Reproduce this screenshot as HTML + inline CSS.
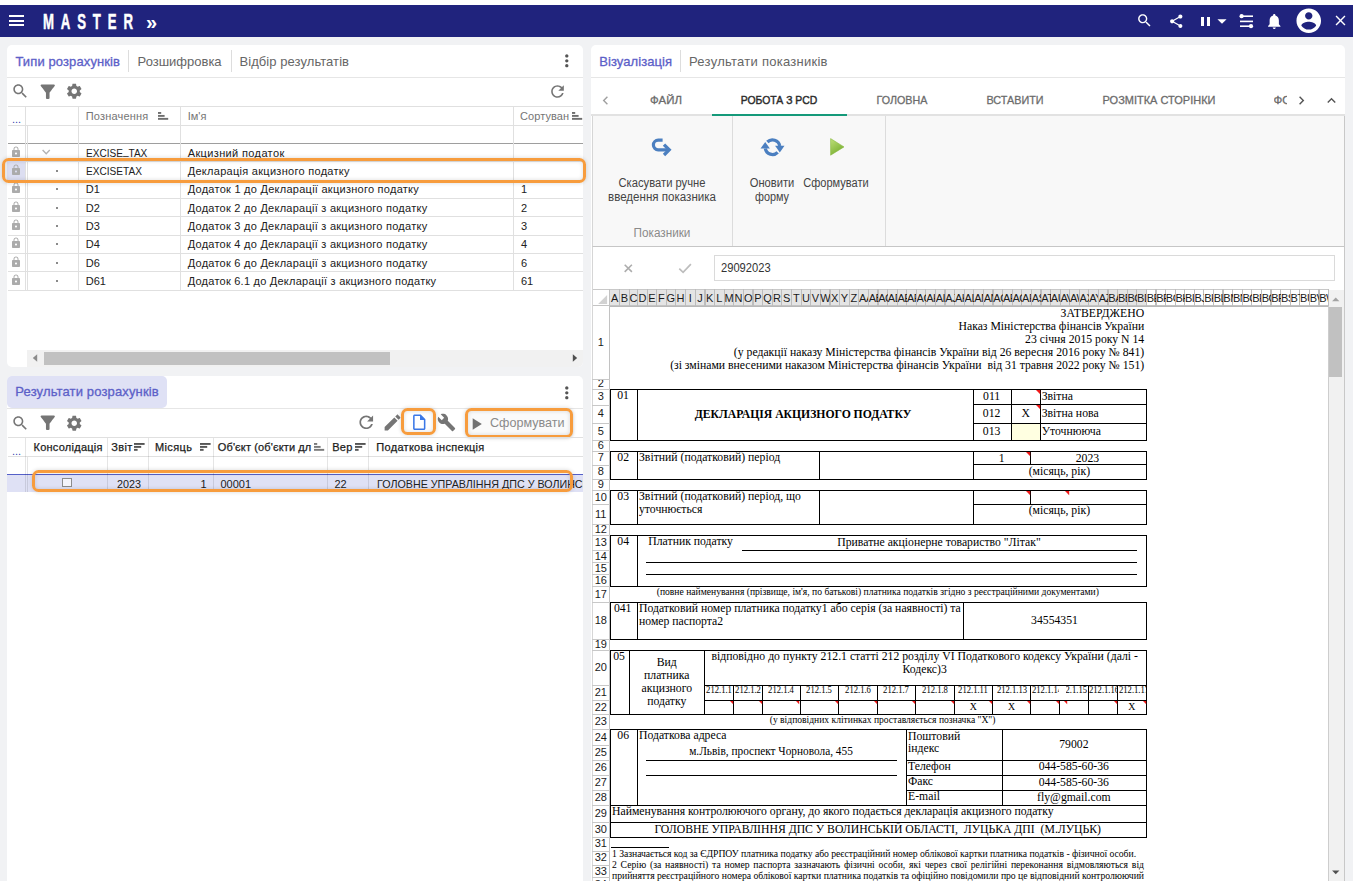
<!DOCTYPE html>
<html lang="uk"><head><meta charset="utf-8"><title>MASTER</title>
<style>
html,body{margin:0;padding:0}
body{width:1353px;height:881px;position:relative;overflow:hidden;background:#f1f2f4;font-family:'Liberation Sans',sans-serif;}
div{box-sizing:border-box}
.panel{position:absolute;background:#fff;border-radius:5px 5px 0 0;overflow:hidden}
.abs{position:absolute}
svg{position:absolute;overflow:visible}
</style></head><body>
<div style="position:absolute;left:0px;top:0px;width:1353px;height:5px;background:#fff"></div>
<div style="position:absolute;left:0px;top:5px;width:1353px;height:32px;background:#20237d"></div>
<div style="position:absolute;left:9px;top:15.2px;width:15px;height:2px;background:#fff"></div>
<div style="position:absolute;left:9px;top:19.6px;width:15px;height:2px;background:#fff"></div>
<div style="position:absolute;left:9px;top:24.0px;width:15px;height:2px;background:#fff"></div>
<div style="position:absolute;white-space:pre;top:9.6px;font-size:22px;color:#fff;font-weight:700;line-height:24px;-webkit-text-stroke:0.5px #fff;left:42.7px;transform:scaleX(0.60);transform-origin:0 0;letter-spacing:11.4px;">MASTER</div>
<div style="position:absolute;white-space:pre;top:9.6px;font-size:20px;color:#fff;font-weight:700;line-height:24px;left:146px;">»</div>
<svg style="left:1136.10px;top:12.30px;" width="17" height="17" viewBox="0 0 24 24"><path fill="#fff" d="M15.5 14h-.79l-.28-.27C15.41 12.59 16 11.11 16 9.5 16 5.91 13.09 3 9.5 3S3 5.91 3 9.5 5.91 16 9.5 16c1.61 0 3.09-.59 4.23-1.57l.27.28v.79l5 4.99L20.49 19l-4.99-5zm-6 0C7.01 14 5 11.99 5 9.5S7.01 5 9.5 5 14 7.01 14 9.5 11.99 14 9.5 14z"/></svg>
<svg style="left:1168.35px;top:12.75px;" width="16.5" height="16.5" viewBox="0 0 24 24"><path fill="#fff" d="M18 16.08c-.76 0-1.44.3-1.96.77L8.91 12.7c.05-.23.09-.46.09-.7s-.04-.47-.09-.7l7.05-4.11c.54.5 1.25.81 2.04.81 1.66 0 3-1.34 3-3s-1.34-3-3-3-3 1.34-3 3c0 .24.04.47.09.7L8.04 9.81C7.5 9.31 6.79 9 6 9c-1.66 0-3 1.34-3 3s1.34 3 3 3c.79 0 1.5-.31 2.04-.81l7.12 4.16c-.05.21-.08.43-.08.65 0 1.61 1.31 2.92 2.92 2.92 1.61 0 2.92-1.31 2.92-2.92s-1.31-2.92-2.92-2.92z"/></svg>
<div style="position:absolute;left:1201px;top:16.5px;width:3px;height:9.5px;background:#fff"></div>
<div style="position:absolute;left:1206.5px;top:16.5px;width:3px;height:9.5px;background:#fff"></div>
<svg style="left:1210.80px;top:9.70px;" width="22" height="22" viewBox="0 0 24 24"><path fill="#fff" d="M7 10l5 5 5-5z"/></svg>
<svg style="left:1239px;top:13px" width="15" height="17" viewBox="0 0 15 17"><g fill="#fff"><circle cx="2.6" cy="3.2" r="2.1"/><rect x="2" y="2.4" width="12" height="1.6"/><rect x="1" y="7.6" width="13" height="1.6"/><circle cx="12" cy="13.2" r="2.1"/><rect x="1" y="12.4" width="11" height="1.6"/></g></svg>
<svg style="left:1264.55px;top:11.75px;" width="18.5" height="18.5" viewBox="0 0 24 24"><path fill="#fff" d="M12 22c1.1 0 2-.9 2-2h-4c0 1.1.89 2 2 2zm6-6v-5c0-3.07-1.64-5.64-4.5-6.32V4c0-.83-.67-1.5-1.5-1.5s-1.5.67-1.5 1.5v.68C7.63 5.36 6 7.92 6 11v5l-2 2v1h16v-1l-2-2z"/></svg>
<svg style="left:1293.85px;top:5.95px;" width="29.5" height="29.5" viewBox="0 0 24 24"><path fill="#fff" d="M12 2C6.48 2 2 6.48 2 12s4.48 10 10 10 10-4.48 10-10S17.52 2 12 2zm0 3c1.66 0 3 1.34 3 3s-1.34 3-3 3-3-1.34-3-3 1.34-3 3-3zm0 14.2c-2.5 0-4.71-1.28-6-3.22.03-1.99 4-3.08 6-3.08 1.99 0 5.97 1.09 6 3.08-1.29 1.94-3.5 3.22-6 3.22z"/></svg>
<svg style="left:1332.10px;top:12.10px;" width="17" height="17" viewBox="0 0 24 24"><path fill="#fff" d="M19 6.41L17.59 5 12 10.59 6.41 5 5 6.41 10.59 12 5 17.59 6.41 19 12 13.41 17.59 19 19 17.59 13.41 12z"/></svg>
<div class="panel" style="left:7px;top:45px;width:576px;height:322px;border-radius:5px"></div>
<div style="position:absolute;white-space:pre;top:54px;font-size:13px;color:#5c60c8;line-height:16px;letter-spacing:0.110px;-webkit-text-stroke:0.3px #5c60c8;left:15.4px;">Типи розрахунків</div>
<div style="position:absolute;left:128px;top:50px;width:1px;height:22px;background:#ddd"></div>
<div style="position:absolute;white-space:pre;top:54px;font-size:13px;color:#666;line-height:16px;letter-spacing:-0.011px;left:137.6px;">Розшифровка</div>
<div style="position:absolute;left:230.5px;top:50px;width:1px;height:22px;background:#ddd"></div>
<div style="position:absolute;white-space:pre;top:54px;font-size:13px;color:#666;line-height:16px;letter-spacing:0.066px;left:239.5px;">Відбір результатів</div>
<svg style="left:557.00px;top:50.70px;" width="19.6" height="19.6" viewBox="0 0 24 24"><path fill="#555" d="M12 8c1.1 0 2-.9 2-2s-.9-2-2-2-2 .9-2 2 .9 2 2 2zm0 2c-1.1 0-2 .9-2 2s.9 2 2 2 2-.9 2-2-.9-2-2-2zm0 6c-1.1 0-2 .9-2 2s.9 2 2 2 2-.9 2-2-.9-2-2-2z"/></svg>
<div style="position:absolute;left:7px;top:77px;width:576px;height:1px;background:#e6e6e6"></div>
<svg style="left:11.15px;top:82.05px;" width="18.5" height="18.5" viewBox="0 0 24 24"><path fill="#757575" d="M15.5 14h-.79l-.28-.27C15.41 12.59 16 11.11 16 9.5 16 5.91 13.09 3 9.5 3S3 5.91 3 9.5 5.91 16 9.5 16c1.61 0 3.09-.59 4.23-1.57l.27.28v.79l5 4.99L20.49 19l-4.99-5zm-6 0C7.01 14 5 11.99 5 9.5S7.01 5 9.5 5 14 7.01 14 9.5 11.99 14 9.5 14z"/></svg>
<svg style="left:36.55px;top:80.75px;" width="21.5" height="21.5" viewBox="0 0 24 24"><path fill="#757575" d="M4.25 5.61C6.27 8.2 10 13 10 13v6c0 .55.45 1 1 1h2c.55 0 1-.45 1-1v-6s3.72-4.8 5.74-7.39c.51-.66.04-1.61-.79-1.61H5.04c-.83 0-1.3.95-.79 1.61z"/></svg>
<svg style="left:65.25px;top:82.25px;" width="18.5" height="18.5" viewBox="0 0 24 24"><path fill="#757575" d="M19.14 12.94c.04-.3.06-.61.06-.94 0-.32-.02-.64-.07-.94l2.03-1.58c.18-.14.23-.41.12-.61l-1.92-3.32c-.12-.22-.37-.29-.59-.22l-2.39.96c-.5-.38-1.03-.7-1.62-.94l-.36-2.54c-.04-.24-.24-.41-.48-.41h-3.84c-.24 0-.43.17-.47.41l-.36 2.54c-.59.24-1.13.57-1.62.94l-2.39-.96c-.22-.08-.47 0-.59.22L2.74 8.87c-.12.21-.08.47.12.61l2.03 1.58c-.05.3-.09.63-.09.94s.02.64.07.94l-2.03 1.58c-.18.14-.23.41-.12.61l1.92 3.32c.12.22.37.29.59.22l2.39-.96c.5.38 1.03.7 1.62.94l.36 2.54c.05.24.24.41.48.41h3.84c.24 0 .44-.17.47-.41l.36-2.54c.59-.24 1.13-.56 1.62-.94l2.39.96c.22.08.47 0 .59-.22l1.92-3.32c.12-.22.07-.47-.12-.61l-2.01-1.58zM12 15.6c-1.98 0-3.6-1.62-3.6-3.6s1.62-3.6 3.6-3.6 3.6 1.62 3.6 3.6-1.62 3.6-3.6 3.6z"/></svg>
<svg style="left:548.00px;top:82.00px;" width="19" height="19" viewBox="0 0 24 24"><path fill="#757575" d="M17.65 6.35C16.2 4.9 14.21 4 12 4c-4.42 0-7.99 3.58-7.99 8s3.57 8 7.99 8c3.73 0 6.84-2.55 7.73-6h-2.08c-.82 2.33-3.04 4-5.65 4-3.31 0-6-2.69-6-6s2.69-6 6-6c1.66 0 3.14.69 4.22 1.78L13 11h7V4l-2.35 2.35z"/></svg>
<div style="position:absolute;left:8px;top:106px;width:575px;height:1px;background:#e0e0e0"></div>
<div style="position:absolute;left:8px;top:125px;width:575px;height:1px;background:#e0e0e0"></div>
<div style="position:absolute;left:8px;top:143px;width:575px;height:1px;background:#9e9e9e"></div>
<div style="position:absolute;left:8px;top:161px;width:575px;height:1px;background:#e0e0e0"></div>
<div style="position:absolute;left:8px;top:180px;width:575px;height:1px;background:#e0e0e0"></div>
<div style="position:absolute;left:8px;top:198px;width:575px;height:1px;background:#e0e0e0"></div>
<div style="position:absolute;left:8px;top:216px;width:575px;height:1px;background:#e0e0e0"></div>
<div style="position:absolute;left:8px;top:235px;width:575px;height:1px;background:#e0e0e0"></div>
<div style="position:absolute;left:8px;top:253px;width:575px;height:1px;background:#e0e0e0"></div>
<div style="position:absolute;left:8px;top:271px;width:575px;height:1px;background:#e0e0e0"></div>
<div style="position:absolute;left:8px;top:290px;width:575px;height:1px;background:#e0e0e0"></div>
<div style="position:absolute;left:25px;top:107px;width:1px;height:183.10000000000002px;background:#e0e0e0"></div>
<div style="position:absolute;left:78px;top:107px;width:1px;height:183.10000000000002px;background:#e0e0e0"></div>
<div style="position:absolute;left:180px;top:107px;width:1px;height:183.10000000000002px;background:#e0e0e0"></div>
<div style="position:absolute;left:513px;top:107px;width:1px;height:183.10000000000002px;background:#e0e0e0"></div>
<div style="position:absolute;left:27px;top:126px;width:1px;height:164.10000000000002px;background:#e0e0e0"></div>
<div style="position:absolute;white-space:pre;top:111.8px;font-size:11px;color:#3346b0;line-height:14px;letter-spacing:-0.086px;left:12px;">...</div>
<div style="position:absolute;white-space:pre;top:109.3px;font-size:11px;color:#757575;line-height:14px;letter-spacing:0.193px;left:85.7px;">Позначення</div>
<svg style="left:157.5px;top:112.3px" width="11" height="8" viewBox="0 0 11 8"><g fill="#6e6e6e"><rect x="0" y="0.00" width="3.2" height="1.9"/><rect x="0" y="2.95" width="6.6" height="1.9"/><rect x="0" y="5.90" width="10.2" height="1.9"/></g></svg>
<div style="position:absolute;white-space:pre;top:109.3px;font-size:11px;color:#757575;line-height:14px;left:187.7px;">Ім&#x27;я</div>
<div style="position:absolute;white-space:pre;top:109.3px;font-size:11px;color:#757575;line-height:14px;letter-spacing:0.069px;left:520px;">Сортуван</div>
<svg style="left:571.9px;top:112.3px" width="11" height="8" viewBox="0 0 11 8"><g fill="#6e6e6e"><rect x="0" y="0.00" width="3.2" height="1.9"/><rect x="0" y="2.95" width="6.6" height="1.9"/><rect x="0" y="5.90" width="10.2" height="1.9"/></g></svg>
<div style="position:absolute;left:7px;top:161px;width:18.3px;height:19px;background:#dcdef1"></div>
<svg style="left:10.00px;top:145.70px;" width="12" height="12" viewBox="0 0 24 24"><path fill="#ababab" d="M18 8h-1V6c0-2.760-2.240-5-5-5S7 3.240 7 6v2H6c-1.100 0-2 .9-2 2v10c0 1.100.9 2 2 2h12c1.100 0 2-.9 2-2V10c0-1.100-.9-2-2-2zm-6 9c-1.100 0-2-.9-2-2s.9-2 2-2 2 .9 2 2-.9 2-2 2zm3.100-9H8.900V6c0-1.710 1.390-3.100 3.100-3.100 1.710 0 3.100 1.390 3.100 3.100v2z"/></svg>
<svg style="left:41px;top:148.30px" width="11" height="8" viewBox="0 0 11 8"><path d="M1.6 2.1L5.2 5.7L8.8 2.1" fill="none" stroke="#b2b2b2" stroke-width="1.4"/></svg>
<div style="position:absolute;white-space:pre;top:146.2px;font-size:11px;color:#212121;line-height:14px;left:85.7px;transform:scaleX(0.9143);transform-origin:0 0;">EXCISE<span style="position:relative;top:-2px">_</span>TAX</div>
<div style="position:absolute;white-space:pre;top:146.2px;font-size:11px;color:#212121;line-height:14px;letter-spacing:0.365px;left:187.7px;">Акцизний податок</div>
<svg style="left:10.00px;top:164.05px;" width="12" height="12" viewBox="0 0 24 24"><path fill="#ababab" d="M18 8h-1V6c0-2.760-2.240-5-5-5S7 3.240 7 6v2H6c-1.100 0-2 .9-2 2v10c0 1.100.9 2 2 2h12c1.100 0 2-.9 2-2V10c0-1.100-.9-2-2-2zm-6 9c-1.100 0-2-.9-2-2s.9-2 2-2 2 .9 2 2-.9 2-2 2zm3.100-9H8.900V6c0-1.710 1.390-3.100 3.100-3.100 1.710 0 3.100 1.390 3.100 3.100v2z"/></svg>
<div style="position:absolute;left:56px;top:169.95000000000002px;width:2px;height:2px;background:#8a8a8a"></div>
<div style="position:absolute;white-space:pre;top:164.2px;font-size:11px;color:#212121;line-height:14px;left:85.7px;transform:scaleX(0.9190);transform-origin:0 0;">EXCISETAX</div>
<div style="position:absolute;white-space:pre;top:164.2px;font-size:11px;color:#212121;line-height:14px;letter-spacing:0.285px;left:187.7px;">Декларація акцизного податку</div>
<svg style="left:10.00px;top:182.40px;" width="12" height="12" viewBox="0 0 24 24"><path fill="#ababab" d="M18 8h-1V6c0-2.760-2.240-5-5-5S7 3.240 7 6v2H6c-1.100 0-2 .9-2 2v10c0 1.100.9 2 2 2h12c1.100 0 2-.9 2-2V10c0-1.100-.9-2-2-2zm-6 9c-1.100 0-2-.9-2-2s.9-2 2-2 2 .9 2 2-.9 2-2 2zm3.100-9H8.900V6c0-1.710 1.390-3.100 3.100-3.100 1.710 0 3.100 1.390 3.100 3.100v2z"/></svg>
<div style="position:absolute;left:56px;top:188.3px;width:2px;height:2px;background:#8a8a8a"></div>
<div style="position:absolute;white-space:pre;top:182.2px;font-size:11px;color:#212121;line-height:14px;left:85.7px;">D1</div>
<div style="position:absolute;white-space:pre;top:182.2px;font-size:11px;color:#212121;line-height:14px;letter-spacing:0.260px;left:187.7px;">Додаток 1 до Декларації акцизного податку</div>
<div style="position:absolute;white-space:pre;top:182.2px;font-size:11px;color:#212121;line-height:14px;left:521px;">1</div>
<svg style="left:10.00px;top:200.75px;" width="12" height="12" viewBox="0 0 24 24"><path fill="#ababab" d="M18 8h-1V6c0-2.760-2.240-5-5-5S7 3.240 7 6v2H6c-1.100 0-2 .9-2 2v10c0 1.100.9 2 2 2h12c1.100 0 2-.9 2-2V10c0-1.100-.9-2-2-2zm-6 9c-1.100 0-2-.9-2-2s.9-2 2-2 2 .9 2 2-.9 2-2 2zm3.100-9H8.900V6c0-1.710 1.390-3.100 3.100-3.100 1.710 0 3.100 1.390 3.100 3.100v2z"/></svg>
<div style="position:absolute;left:56px;top:206.65000000000003px;width:2px;height:2px;background:#8a8a8a"></div>
<div style="position:absolute;white-space:pre;top:201.2px;font-size:11px;color:#212121;line-height:14px;left:85.7px;">D2</div>
<div style="position:absolute;white-space:pre;top:201.2px;font-size:11px;color:#212121;line-height:14px;letter-spacing:0.254px;left:187.7px;">Додаток 2 до Декларації з акцизного податку</div>
<div style="position:absolute;white-space:pre;top:201.2px;font-size:11px;color:#212121;line-height:14px;left:521px;">2</div>
<svg style="left:10.00px;top:219.10px;" width="12" height="12" viewBox="0 0 24 24"><path fill="#ababab" d="M18 8h-1V6c0-2.760-2.240-5-5-5S7 3.240 7 6v2H6c-1.100 0-2 .9-2 2v10c0 1.100.9 2 2 2h12c1.100 0 2-.9 2-2V10c0-1.100-.9-2-2-2zm-6 9c-1.100 0-2-.9-2-2s.9-2 2-2 2 .9 2 2-.9 2-2 2zm3.100-9H8.900V6c0-1.710 1.390-3.100 3.100-3.100 1.710 0 3.100 1.390 3.100 3.100v2z"/></svg>
<div style="position:absolute;left:56px;top:225.00000000000003px;width:2px;height:2px;background:#8a8a8a"></div>
<div style="position:absolute;white-space:pre;top:219.2px;font-size:11px;color:#212121;line-height:14px;left:85.7px;">D3</div>
<div style="position:absolute;white-space:pre;top:219.2px;font-size:11px;color:#212121;line-height:14px;letter-spacing:0.254px;left:187.7px;">Додаток 3 до Декларації з акцизного податку</div>
<div style="position:absolute;white-space:pre;top:219.2px;font-size:11px;color:#212121;line-height:14px;left:521px;">3</div>
<svg style="left:10.00px;top:237.45px;" width="12" height="12" viewBox="0 0 24 24"><path fill="#ababab" d="M18 8h-1V6c0-2.760-2.240-5-5-5S7 3.240 7 6v2H6c-1.100 0-2 .9-2 2v10c0 1.100.9 2 2 2h12c1.100 0 2-.9 2-2V10c0-1.100-.9-2-2-2zm-6 9c-1.100 0-2-.9-2-2s.9-2 2-2 2 .9 2 2-.9 2-2 2zm3.100-9H8.900V6c0-1.710 1.390-3.100 3.100-3.100 1.710 0 3.100 1.390 3.100 3.100v2z"/></svg>
<div style="position:absolute;left:56px;top:243.35000000000002px;width:2px;height:2px;background:#8a8a8a"></div>
<div style="position:absolute;white-space:pre;top:237.2px;font-size:11px;color:#212121;line-height:14px;left:85.7px;">D4</div>
<div style="position:absolute;white-space:pre;top:237.2px;font-size:11px;color:#212121;line-height:14px;letter-spacing:0.254px;left:187.7px;">Додаток 4 до Декларації з акцизного податку</div>
<div style="position:absolute;white-space:pre;top:237.2px;font-size:11px;color:#212121;line-height:14px;left:521px;">4</div>
<svg style="left:10.00px;top:255.80px;" width="12" height="12" viewBox="0 0 24 24"><path fill="#ababab" d="M18 8h-1V6c0-2.760-2.240-5-5-5S7 3.240 7 6v2H6c-1.100 0-2 .9-2 2v10c0 1.100.9 2 2 2h12c1.100 0 2-.9 2-2V10c0-1.100-.9-2-2-2zm-6 9c-1.100 0-2-.9-2-2s.9-2 2-2 2 .9 2 2-.9 2-2 2zm3.100-9H8.900V6c0-1.710 1.390-3.100 3.100-3.100 1.710 0 3.100 1.390 3.100 3.100v2z"/></svg>
<div style="position:absolute;left:56px;top:261.70000000000005px;width:2px;height:2px;background:#8a8a8a"></div>
<div style="position:absolute;white-space:pre;top:256.2px;font-size:11px;color:#212121;line-height:14px;left:85.7px;">D6</div>
<div style="position:absolute;white-space:pre;top:256.2px;font-size:11px;color:#212121;line-height:14px;letter-spacing:0.254px;left:187.7px;">Додаток 6 до Декларації з акцизного податку</div>
<div style="position:absolute;white-space:pre;top:256.2px;font-size:11px;color:#212121;line-height:14px;left:521px;">6</div>
<svg style="left:10.00px;top:274.15px;" width="12" height="12" viewBox="0 0 24 24"><path fill="#ababab" d="M18 8h-1V6c0-2.760-2.240-5-5-5S7 3.240 7 6v2H6c-1.100 0-2 .9-2 2v10c0 1.100.9 2 2 2h12c1.100 0 2-.9 2-2V10c0-1.100-.9-2-2-2zm-6 9c-1.100 0-2-.9-2-2s.9-2 2-2 2 .9 2 2-.9 2-2 2zm3.100-9H8.900V6c0-1.710 1.390-3.100 3.100-3.100 1.710 0 3.100 1.390 3.100 3.100v2z"/></svg>
<div style="position:absolute;left:56px;top:280.05px;width:2px;height:2px;background:#8a8a8a"></div>
<div style="position:absolute;white-space:pre;top:274.2px;font-size:11px;color:#212121;line-height:14px;left:85.7px;">D61</div>
<div style="position:absolute;white-space:pre;top:274.2px;font-size:11px;color:#212121;line-height:14px;letter-spacing:0.237px;left:187.7px;">Додаток 6.1 до Декларації з акцизного податку</div>
<div style="position:absolute;white-space:pre;top:274.2px;font-size:11px;color:#212121;line-height:14px;left:521px;">61</div>
<div style="position:absolute;left:180px;top:179.6px;width:333px;height:1.2px;background:#a4a9c0"></div>
<div style="position:absolute;left:2px;top:158px;width:583.8px;height:25px;border:3px solid #f79c3d;border-radius:6.5px;box-shadow:0 0 4px rgba(0,0,0,.16),inset 0 0 4px rgba(0,0,0,.14);"></div>
<div style="position:absolute;left:27px;top:350.2px;width:556px;height:16.8px;background:#f1f1f1;border-radius:0 0 5px 0"></div>
<div style="position:absolute;left:44px;top:352px;width:346px;height:12.7px;background:#c1c1c1"></div>
<svg style="left:32px;top:354.4px" width="6" height="8" viewBox="0 0 6 8"><path fill="#8c8c8c" d="M5.2 0.3v7.4L0.8 4z"/></svg>
<svg style="left:572px;top:354.4px" width="6" height="8" viewBox="0 0 6 8"><path fill="#505050" d="M0.8 0.3v7.4L5.2 4z"/></svg>
<div class="panel" style="left:7px;top:376px;width:576px;height:520px"></div>
<div style="position:absolute;left:7px;top:376px;width:160px;height:32px;background:#dfe1f5;border-radius:5px"></div>
<div style="position:absolute;white-space:pre;top:384.3px;font-size:13px;color:#5c60c8;line-height:16px;letter-spacing:0.143px;-webkit-text-stroke:0.3px #5c60c8;left:15.3px;">Результати розрахунків</div>
<svg style="left:557.00px;top:382.50px;" width="19.6" height="19.6" viewBox="0 0 24 24"><path fill="#555" d="M12 8c1.1 0 2-.9 2-2s-.9-2-2-2-2 .9-2 2 .9 2 2 2zm0 2c-1.1 0-2 .9-2 2s.9 2 2 2 2-.9 2-2-.9-2-2-2zm0 6c-1.1 0-2 .9-2 2s.9 2 2 2 2-.9 2-2-.9-2-2-2z"/></svg>
<div style="position:absolute;left:7px;top:408.3px;width:576px;height:1px;background:#e6e6e6"></div>
<svg style="left:11.05px;top:414.05px;" width="18.5" height="18.5" viewBox="0 0 24 24"><path fill="#757575" d="M15.5 14h-.79l-.28-.27C15.41 12.59 16 11.11 16 9.5 16 5.91 13.09 3 9.5 3S3 5.91 3 9.5 5.91 16 9.5 16c1.61 0 3.09-.59 4.23-1.57l.27.28v.79l5 4.99L20.49 19l-4.99-5zm-6 0C7.01 14 5 11.99 5 9.5S7.01 5 9.5 5 14 7.01 14 9.5 11.99 14 9.5 14z"/></svg>
<svg style="left:36.55px;top:412.25px;" width="21.5" height="21.5" viewBox="0 0 24 24"><path fill="#757575" d="M4.25 5.61C6.27 8.2 10 13 10 13v6c0 .55.45 1 1 1h2c.55 0 1-.45 1-1v-6s3.72-4.8 5.74-7.39c.51-.66.04-1.61-.79-1.61H5.04c-.83 0-1.3.95-.79 1.61z"/></svg>
<svg style="left:65.25px;top:413.75px;" width="18.5" height="18.5" viewBox="0 0 24 24"><path fill="#757575" d="M19.14 12.94c.04-.3.06-.61.06-.94 0-.32-.02-.64-.07-.94l2.03-1.58c.18-.14.23-.41.12-.61l-1.92-3.32c-.12-.22-.37-.29-.59-.22l-2.39.96c-.5-.38-1.03-.7-1.62-.94l-.36-2.54c-.04-.24-.24-.41-.48-.41h-3.84c-.24 0-.43.17-.47.41l-.36 2.54c-.59.24-1.13.57-1.62.94l-2.39-.96c-.22-.08-.47 0-.59.22L2.74 8.87c-.12.21-.08.47.12.61l2.03 1.58c-.05.3-.09.63-.09.94s.02.64.07.94l-2.03 1.58c-.18.14-.23.41-.12.61l1.92 3.32c.12.22.37.29.59.22l2.39-.96c.5.38 1.03.7 1.62.94l.36 2.54c.05.24.24.41.48.41h3.84c.24 0 .44-.17.47-.41l.36-2.54c.59-.24 1.13-.56 1.62-.94l2.39.96c.22.08.47 0 .59-.22l1.92-3.32c.12-.22.07-.47-.12-.61l-2.01-1.58zM12 15.6c-1.98 0-3.6-1.62-3.6-3.6s1.62-3.6 3.6-3.6 3.6 1.62 3.6 3.6-1.62 3.6-3.6 3.6z"/></svg>
<svg style="left:355.55px;top:412.15px;" width="20.5" height="20.5" viewBox="0 0 24 24"><path fill="#757575" d="M17.65 6.35C16.2 4.9 14.21 4 12 4c-4.42 0-7.99 3.58-7.99 8s3.57 8 7.99 8c3.73 0 6.84-2.55 7.73-6h-2.08c-.82 2.33-3.04 4-5.65 4-3.31 0-6-2.69-6-6s2.69-6 6-6c1.66 0 3.14.69 4.22 1.78L13 11h7V4l-2.35 2.35z"/></svg>
<svg style="left:382.00px;top:412.20px;" width="21" height="21" viewBox="0 0 24 24"><path fill="#757575" d="M3 17.25V21h3.75L17.81 9.94l-3.75-3.75L3 17.25zM20.71 7.04c.39-.39.39-1.02 0-1.41l-2.34-2.34c-.39-.39-1.02-.39-1.41 0l-1.83 1.83 3.75 3.75 1.83-1.83z"/></svg>
<svg style="left:410.35px;top:413.05px;" width="18.5" height="18.5" viewBox="0 0 24 24"><path fill="#3b78e7" d="M14 2H6c-1.100 0-1.990.9-1.990 2L4 20c0 1.100.890 2 1.990 2H18c1.100 0 2-.9 2-2V8l-6-6zM6 20V4h7v5h5v11H6z"/></svg>
<svg style="left:437.30px;top:413.40px;" width="19" height="19" viewBox="0 0 24 24"><path fill="#757575" d="M22.7 19l-9.1-9.1c.9-2.3.4-5-1.5-6.900-2-2-5-2.400-7.400-1.300L9 6 6 9 1.600 4.700C.4 7.100.9 10.100 2.900 12.100c1.900 1.900 4.600 2.400 6.900 1.500l9.100 9.100c.4.400 1 .400 1.400 0l2.300-2.300c.5-.400.5-1.100.100-1.400z"/></svg>
<div style="position:absolute;left:467px;top:410px;width:105px;height:26px;background:#fafafa;border-radius:4px;box-shadow:0 1px 3px rgba(0,0,0,.25)"></div>
<svg style="left:465.50px;top:413.50px;" width="20" height="20" viewBox="0 0 24 24"><path fill="#727272" d="M8 5v14l11-7z"/></svg>
<div style="position:absolute;white-space:pre;top:415.2px;font-size:13px;color:#8a8a8a;line-height:16px;left:490.1px;transform:scaleX(0.9667);transform-origin:0 0;">Сформувати</div>
<div style="position:absolute;left:401.4px;top:408.3px;width:34.3px;height:27.2px;border:3px solid #f79c3d;border-radius:6.5px;box-shadow:0 0 4px rgba(0,0,0,.16),inset 0 0 4px rgba(0,0,0,.14);"></div>
<div style="position:absolute;left:465.3px;top:408.3px;width:107.3px;height:29.3px;border:3px solid #f79c3d;border-radius:6.5px;box-shadow:0 0 4px rgba(0,0,0,.16),inset 0 0 4px rgba(0,0,0,.14);"></div>
<div style="position:absolute;left:8px;top:437px;width:575px;height:1px;background:#e0e0e0"></div>
<div style="position:absolute;left:8px;top:456px;width:575px;height:1px;background:#e0e0e0"></div>
<div style="position:absolute;left:7px;top:475px;width:576px;height:16.5px;background:#dfe1f5"></div>
<div style="position:absolute;left:7px;top:474px;width:576px;height:1px;background:#5560c8"></div>
<div style="position:absolute;left:25px;top:438px;width:1px;height:53.5px;background:rgba(0,0,0,.1)"></div>
<div style="position:absolute;left:107px;top:438px;width:1px;height:53.5px;background:rgba(0,0,0,.1)"></div>
<div style="position:absolute;left:148px;top:438px;width:1px;height:53.5px;background:rgba(0,0,0,.1)"></div>
<div style="position:absolute;left:213px;top:438px;width:1px;height:53.5px;background:rgba(0,0,0,.1)"></div>
<div style="position:absolute;left:327px;top:438px;width:1px;height:53.5px;background:rgba(0,0,0,.1)"></div>
<div style="position:absolute;left:368px;top:438px;width:1px;height:53.5px;background:rgba(0,0,0,.1)"></div>
<div style="position:absolute;left:27px;top:457px;width:1px;height:34.5px;background:rgba(0,0,0,.1)"></div>
<div style="position:absolute;white-space:pre;top:443.6px;font-size:11px;color:#3346b0;line-height:14px;letter-spacing:-0.086px;left:12px;">...</div>
<div style="position:absolute;white-space:pre;top:440.3px;font-size:11px;color:#1c1c1c;line-height:14px;letter-spacing:0.254px;-webkit-text-stroke:0.25px #1c1c1c;left:33.5px;">Консолідація</div>
<div style="position:absolute;white-space:pre;top:440.3px;font-size:11px;color:#1c1c1c;line-height:14px;letter-spacing:0.339px;-webkit-text-stroke:0.25px #1c1c1c;left:111.3px;">Звіт</div>
<svg style="left:134.2px;top:443.1px" width="11" height="8" viewBox="0 0 11 8"><g fill="#555"><rect x="0" y="0.00" width="10.6" height="1.9"/><rect x="0" y="2.95" width="7.2" height="1.9"/><rect x="0" y="5.90" width="3.6" height="1.9"/></g></svg>
<div style="position:absolute;white-space:pre;top:440.3px;font-size:11px;color:#1c1c1c;line-height:14px;letter-spacing:0.378px;-webkit-text-stroke:0.25px #1c1c1c;left:155px;">Місяць</div>
<svg style="left:199.5px;top:443.1px" width="11" height="8" viewBox="0 0 11 8"><g fill="#555"><rect x="0" y="0.00" width="10.6" height="1.9"/><rect x="0" y="2.95" width="7.2" height="1.9"/><rect x="0" y="5.90" width="3.6" height="1.9"/></g></svg>
<div style="position:absolute;white-space:pre;top:440.3px;font-size:11px;color:#1c1c1c;line-height:14px;letter-spacing:0.123px;-webkit-text-stroke:0.25px #1c1c1c;left:217.8px;">Об&#x27;єкт (об&#x27;єкти дл</div>
<svg style="left:313.8px;top:443.1px" width="11" height="8" viewBox="0 0 11 8"><g fill="#7a7a7a"><rect x="0" y="0.00" width="3.2" height="1.9"/><rect x="0" y="2.95" width="6.6" height="1.9"/><rect x="0" y="5.90" width="10.2" height="1.9"/></g></svg>
<div style="position:absolute;white-space:pre;top:440.3px;font-size:11px;color:#1c1c1c;line-height:14px;letter-spacing:0.211px;-webkit-text-stroke:0.25px #1c1c1c;left:332.3px;">Вер</div>
<svg style="left:355px;top:443.1px" width="11" height="8" viewBox="0 0 11 8"><g fill="#555"><rect x="0" y="0.00" width="10.6" height="1.9"/><rect x="0" y="2.95" width="7.2" height="1.9"/><rect x="0" y="5.90" width="3.6" height="1.9"/></g></svg>
<div style="position:absolute;white-space:pre;top:440.3px;font-size:11px;color:#1c1c1c;line-height:14px;letter-spacing:0.296px;-webkit-text-stroke:0.25px #1c1c1c;left:376.3px;">Податкова інспекція</div>
<div style="position:absolute;left:62.3px;top:478.3px;width:9.5px;height:9px;border:1px solid #8c8c8c;background:#f4f4fb"></div>
<div style="position:absolute;white-space:pre;top:476.8px;font-size:11px;color:#212121;line-height:14px;left:116.5px;transform:scaleX(0.9802);transform-origin:0 0;">2023</div>
<div style="position:absolute;white-space:pre;top:476.8px;font-size:11px;color:#212121;line-height:14px;left:-393.5px;width:600px;text-align:right;">1</div>
<div style="position:absolute;white-space:pre;top:476.8px;font-size:11px;color:#212121;line-height:14px;letter-spacing:-0.023px;left:220.5px;">00001</div>
<div style="position:absolute;white-space:pre;top:476.8px;font-size:11px;color:#212121;line-height:14px;left:334.5px;">22</div>
<div style="position:absolute;left:376.3px;top:476.8px;width:206.7px;height:14px;overflow:hidden">
<div style="position:absolute;white-space:pre;top:0px;font-size:11px;color:#212121;line-height:14px;left:0.3px;transform:scaleX(0.9733);transform-origin:0 0;">ГОЛОВНЕ УПРАВЛІННЯ ДПС У ВОЛИНСЬКІЙ ОБЛАСТІ</div>
</div>
<div style="position:absolute;left:213.5px;top:490.5px;width:114px;height:1px;background:#bbb"></div>
<div style="position:absolute;left:32px;top:470.1px;width:541.1px;height:21.6px;border:3px solid #f79c3d;border-radius:6.5px;box-shadow:0 0 4px rgba(0,0,0,.16),inset 0 0 4px rgba(0,0,0,.14);"></div>
<div class="panel" style="left:591px;top:45px;width:754px;height:850px"></div>
<div style="position:absolute;white-space:pre;top:54px;font-size:13px;color:#5c60c8;line-height:16px;letter-spacing:0.073px;-webkit-text-stroke:0.3px #5c60c8;left:599.2px;">Візуалізація</div>
<div style="position:absolute;left:680px;top:50px;width:1px;height:22px;background:#ddd"></div>
<div style="position:absolute;white-space:pre;top:54px;font-size:13px;color:#666;line-height:16px;letter-spacing:0.264px;left:689px;">Результати показників</div>
<div style="position:absolute;left:591px;top:77px;width:754px;height:1px;background:#e6e6e6"></div>
<svg style="left:596.80px;top:91.80px;" width="17" height="17" viewBox="0 0 24 24"><path fill="#a0a0a0" d="M15.41 7.41L14 6l-6 6 6 6 1.410-1.410L10.830 12z"/></svg>
<div style="position:absolute;white-space:pre;top:92.8px;font-size:11.6px;color:#6b6b6b;line-height:14px;-webkit-text-stroke:0.3px #6b6b6b;left:366.4px;width:600px;text-align:center;transform:scaleX(0.9865);transform-origin:50% 0;">ФАЙЛ</div>
<div style="position:absolute;white-space:pre;top:92.8px;font-size:11.6px;color:#2b2b2b;line-height:14px;-webkit-text-stroke:0.45px #2b2b2b;left:479.20000000000005px;width:600px;text-align:center;transform:scaleX(0.8974);transform-origin:50% 0;">РОБОТА З PCD</div>
<div style="position:absolute;white-space:pre;top:92.8px;font-size:11.6px;color:#6b6b6b;line-height:14px;-webkit-text-stroke:0.3px #6b6b6b;left:601.8px;width:600px;text-align:center;transform:scaleX(0.9239);transform-origin:50% 0;">ГОЛОВНА</div>
<div style="position:absolute;white-space:pre;top:92.8px;font-size:11.6px;color:#6b6b6b;line-height:14px;-webkit-text-stroke:0.3px #6b6b6b;left:715px;width:600px;text-align:center;transform:scaleX(0.9306);transform-origin:50% 0;">ВСТАВИТИ</div>
<div style="position:absolute;white-space:pre;top:92.8px;font-size:11.6px;color:#6b6b6b;line-height:14px;-webkit-text-stroke:0.3px #6b6b6b;left:858.5px;width:600px;text-align:center;transform:scaleX(0.9483);transform-origin:50% 0;">РОЗМІТКА СТОРІНКИ</div>
<div style="position:absolute;left:1273.5px;top:90px;width:13px;height:20px;overflow:hidden">
<div style="position:absolute;white-space:pre;top:2.8px;font-size:11.6px;color:#6b6b6b;line-height:14px;-webkit-text-stroke:0.3px #6b6b6b;left:0px;">ФОРМУЛИ</div>
</div>
<svg style="left:1293.00px;top:91.50px;" width="17" height="17" viewBox="0 0 24 24"><path fill="#555" d="M10 6L8.590 7.410 13.170 12l-4.580 4.590L10 18l6-6z"/></svg>
<svg style="left:1322.50px;top:91.50px;" width="17" height="17" viewBox="0 0 24 24"><path fill="#555" d="M12 8l-6 6 1.410 1.410L12 10.830l4.590 4.590L18 14z"/></svg>
<div style="position:absolute;left:591px;top:114px;width:754px;height:2px;background:#e2e2e2"></div>
<div style="position:absolute;left:711.8px;top:114px;width:135.2px;height:2px;background:#159a7a"></div>
<div style="position:absolute;left:591.5px;top:116px;width:753.5px;height:130.5px;background:#f8f8f8;border-left:1px solid #d6d6d6;border-right:1px solid #d6d6d6;border-bottom:1px solid #c6c6c6"></div>
<div style="position:absolute;left:732.3px;top:116px;width:1px;height:130px;background:#dcdcdc"></div>
<div style="position:absolute;left:885.3px;top:116px;width:1px;height:130px;background:#dcdcdc"></div>
<div style="position:absolute;white-space:pre;top:175.7px;font-size:12px;color:#444;line-height:14px;left:362.20000000000005px;width:600px;text-align:center;transform:scaleX(0.9341);transform-origin:50% 0;">Скасувати ручне</div>
<div style="position:absolute;white-space:pre;top:190px;font-size:12px;color:#444;line-height:14px;left:362px;width:600px;text-align:center;transform:scaleX(0.9640);transform-origin:50% 0;">введення показника</div>
<div style="position:absolute;white-space:pre;top:226px;font-size:12px;color:#8a8a8a;line-height:14px;left:362px;width:600px;text-align:center;transform:scaleX(0.9769);transform-origin:50% 0;">Показники</div>
<div style="position:absolute;white-space:pre;top:175.7px;font-size:12px;color:#444;line-height:14px;left:472.29999999999995px;width:600px;text-align:center;transform:scaleX(0.9307);transform-origin:50% 0;">Оновити</div>
<div style="position:absolute;white-space:pre;top:190px;font-size:12px;color:#444;line-height:14px;left:472.29999999999995px;width:600px;text-align:center;transform:scaleX(0.9040);transform-origin:50% 0;">форму</div>
<div style="position:absolute;white-space:pre;top:175.7px;font-size:12px;color:#444;line-height:14px;left:535.7px;width:600px;text-align:center;transform:scaleX(0.9195);transform-origin:50% 0;">Сформувати</div>
<svg style="left:650px;top:137px" width="23" height="20" viewBox="0 0 23 20"><g fill="none" stroke="#4b7fc0" stroke-width="3.2" stroke-linejoin="miter"><path d="M12.6 3.2H8.2a4.8 4.8 0 0 0 0 9.6H18"/><path d="M14 7.6l5.2 5.2-5.2 5.2" stroke-width="3.3"/></g></svg>
<svg style="left:760px;top:136.5px" width="25" height="21" viewBox="0 0 25 21"><g fill="none" stroke="#4b7fc0" stroke-width="3.3"><path d="M7.34 5.04A7.3 7.3 0 0 1 19.69 8.93"/><path d="M17.66 15.36A7.3 7.3 0 0 1 5.31 11.47"/></g><g fill="#4b7fc0"><path d="M15.10 8.80h9.4l-4.7 6.6z"/><path d="M0.50 11.60h9.4l-4.7-6.6z"/></g></svg>
<svg style="left:829.5px;top:137.8px" width="15" height="18" viewBox="0 0 15 18"><defs><linearGradient id="pg" x1="0" y1="0" x2="0.6" y2="1"><stop offset="0" stop-color="#bfe07a"/><stop offset="1" stop-color="#76ad2e"/></linearGradient></defs><path fill="url(#pg)" stroke="#86b93e" stroke-width="0.6" d="M0.6 0.6v16.6L14 8.9z"/></svg>
<div style="position:absolute;left:591.5px;top:246.5px;width:753.5px;height:43px;background:#fff;border-left:1px solid #d6d6d6;border-right:1px solid #d6d6d6"></div>
<svg style="left:623.1px;top:263.3px" width="10.6" height="10.6" viewBox="0 0 10.6 10.6"><path d="M1.7 1.7L8.9 8.9M8.9 1.7L1.7 8.9" stroke="#adadad" stroke-width="1.6" fill="none"/></svg>
<svg style="left:678px;top:262px" width="14" height="12" viewBox="0 0 14 12"><path d="M1.3 6.6L5.1 10.3L12.9 2.2" stroke="#bdbdbd" stroke-width="1.7" fill="none"/></svg>
<div style="position:absolute;left:714.2px;top:255px;width:621px;height:25.7px;border:1px solid #dadada;background:#fff"></div>
<div style="position:absolute;white-space:pre;top:261.2px;font-size:12px;color:#333;line-height:14px;left:720.7px;transform:scaleX(0.9290);transform-origin:0 0;">29092023</div>
<div style="position:absolute;left:592px;top:289px;width:753px;height:600px;background:#fff"></div>
<div style="position:absolute;left:592px;top:289px;width:737px;height:17px;background:#fff;border-top:1px solid #c8c8c8;border-bottom:1px solid #c4c4c4"></div>
<div style="position:absolute;left:610.3px;top:289px;width:536.0px;height:17px;background:#e4e4e4;border-top:1px solid #c8c8c8;border-bottom:1px solid #c4c4c4"></div>
<svg style="left:598px;top:295px" width="9.2" height="9" viewBox="0 0 10 10"><path fill="#d2d2d2" d="M10 0V10H0z"/></svg>
<div style="position:absolute;left:609.3px;top:289px;width:1.2px;height:17px;background:#bdbdbd"></div>
<div style="position:absolute;left:618.8px;top:289px;width:1.2px;height:17px;background:#bdbdbd"></div>
<div style="position:absolute;left:628.8px;top:289px;width:1.2px;height:17px;background:#bdbdbd"></div>
<div style="position:absolute;left:637.0px;top:289px;width:1.2px;height:17px;background:#bdbdbd"></div>
<div style="position:absolute;left:646.7px;top:289px;width:1.2px;height:17px;background:#bdbdbd"></div>
<div style="position:absolute;left:655.9px;top:289px;width:1.2px;height:17px;background:#bdbdbd"></div>
<div style="position:absolute;left:665.8px;top:289px;width:1.2px;height:17px;background:#bdbdbd"></div>
<div style="position:absolute;left:674.8px;top:289px;width:1.2px;height:17px;background:#bdbdbd"></div>
<div style="position:absolute;left:684.9px;top:289px;width:1.2px;height:17px;background:#bdbdbd"></div>
<div style="position:absolute;left:694.7px;top:289px;width:1.2px;height:17px;background:#bdbdbd"></div>
<div style="position:absolute;left:704.32px;top:289px;width:1.2px;height:17px;background:#bdbdbd"></div>
<div style="position:absolute;left:713.94px;top:289px;width:1.2px;height:17px;background:#bdbdbd"></div>
<div style="position:absolute;left:723.56px;top:289px;width:1.2px;height:17px;background:#bdbdbd"></div>
<div style="position:absolute;left:733.17px;top:289px;width:1.2px;height:17px;background:#bdbdbd"></div>
<div style="position:absolute;left:742.79px;top:289px;width:1.2px;height:17px;background:#bdbdbd"></div>
<div style="position:absolute;left:752.41px;top:289px;width:1.2px;height:17px;background:#bdbdbd"></div>
<div style="position:absolute;left:762.03px;top:289px;width:1.2px;height:17px;background:#bdbdbd"></div>
<div style="position:absolute;left:771.65px;top:289px;width:1.2px;height:17px;background:#bdbdbd"></div>
<div style="position:absolute;left:781.27px;top:289px;width:1.2px;height:17px;background:#bdbdbd"></div>
<div style="position:absolute;left:790.89px;top:289px;width:1.2px;height:17px;background:#bdbdbd"></div>
<div style="position:absolute;left:800.51px;top:289px;width:1.2px;height:17px;background:#bdbdbd"></div>
<div style="position:absolute;left:810.12px;top:289px;width:1.2px;height:17px;background:#bdbdbd"></div>
<div style="position:absolute;left:819.74px;top:289px;width:1.2px;height:17px;background:#bdbdbd"></div>
<div style="position:absolute;left:829.36px;top:289px;width:1.2px;height:17px;background:#bdbdbd"></div>
<div style="position:absolute;left:838.98px;top:289px;width:1.2px;height:17px;background:#bdbdbd"></div>
<div style="position:absolute;left:848.6px;top:289px;width:1.2px;height:17px;background:#bdbdbd"></div>
<div style="position:absolute;left:858.19px;top:289px;width:1.2px;height:17px;background:#bdbdbd"></div>
<div style="position:absolute;left:867.77px;top:289px;width:1.2px;height:17px;background:#bdbdbd"></div>
<div style="position:absolute;left:877.36px;top:289px;width:1.2px;height:17px;background:#bdbdbd"></div>
<div style="position:absolute;left:886.95px;top:289px;width:1.2px;height:17px;background:#bdbdbd"></div>
<div style="position:absolute;left:896.54px;top:289px;width:1.2px;height:17px;background:#bdbdbd"></div>
<div style="position:absolute;left:906.12px;top:289px;width:1.2px;height:17px;background:#bdbdbd"></div>
<div style="position:absolute;left:915.71px;top:289px;width:1.2px;height:17px;background:#bdbdbd"></div>
<div style="position:absolute;left:925.3px;top:289px;width:1.2px;height:17px;background:#bdbdbd"></div>
<div style="position:absolute;left:934.88px;top:289px;width:1.2px;height:17px;background:#bdbdbd"></div>
<div style="position:absolute;left:944.47px;top:289px;width:1.2px;height:17px;background:#bdbdbd"></div>
<div style="position:absolute;left:954.06px;top:289px;width:1.2px;height:17px;background:#bdbdbd"></div>
<div style="position:absolute;left:963.65px;top:289px;width:1.2px;height:17px;background:#bdbdbd"></div>
<div style="position:absolute;left:973.23px;top:289px;width:1.2px;height:17px;background:#bdbdbd"></div>
<div style="position:absolute;left:982.82px;top:289px;width:1.2px;height:17px;background:#bdbdbd"></div>
<div style="position:absolute;left:992.41px;top:289px;width:1.2px;height:17px;background:#bdbdbd"></div>
<div style="position:absolute;left:1001.99px;top:289px;width:1.2px;height:17px;background:#bdbdbd"></div>
<div style="position:absolute;left:1011.58px;top:289px;width:1.2px;height:17px;background:#bdbdbd"></div>
<div style="position:absolute;left:1021.17px;top:289px;width:1.2px;height:17px;background:#bdbdbd"></div>
<div style="position:absolute;left:1030.75px;top:289px;width:1.2px;height:17px;background:#bdbdbd"></div>
<div style="position:absolute;left:1040.34px;top:289px;width:1.2px;height:17px;background:#bdbdbd"></div>
<div style="position:absolute;left:1049.93px;top:289px;width:1.2px;height:17px;background:#bdbdbd"></div>
<div style="position:absolute;left:1059.52px;top:289px;width:1.2px;height:17px;background:#bdbdbd"></div>
<div style="position:absolute;left:1069.1px;top:289px;width:1.2px;height:17px;background:#bdbdbd"></div>
<div style="position:absolute;left:1078.69px;top:289px;width:1.2px;height:17px;background:#bdbdbd"></div>
<div style="position:absolute;left:1088.28px;top:289px;width:1.2px;height:17px;background:#bdbdbd"></div>
<div style="position:absolute;left:1097.86px;top:289px;width:1.2px;height:17px;background:#bdbdbd"></div>
<div style="position:absolute;left:1107.45px;top:289px;width:1.2px;height:17px;background:#bdbdbd"></div>
<div style="position:absolute;left:1117.04px;top:289px;width:1.2px;height:17px;background:#bdbdbd"></div>
<div style="position:absolute;left:1126.63px;top:289px;width:1.2px;height:17px;background:#bdbdbd"></div>
<div style="position:absolute;left:1136.21px;top:289px;width:1.2px;height:17px;background:#bdbdbd"></div>
<div style="position:absolute;left:1145.8px;top:289px;width:1.2px;height:17px;background:#bdbdbd"></div>
<div style="position:absolute;left:1155.38px;top:289px;width:1.2px;height:17px;background:#bdbdbd"></div>
<div style="position:absolute;left:1164.97px;top:289px;width:1.2px;height:17px;background:#bdbdbd"></div>
<div style="position:absolute;left:1174.55px;top:289px;width:1.2px;height:17px;background:#bdbdbd"></div>
<div style="position:absolute;left:1184.14px;top:289px;width:1.2px;height:17px;background:#bdbdbd"></div>
<div style="position:absolute;left:1193.72px;top:289px;width:1.2px;height:17px;background:#bdbdbd"></div>
<div style="position:absolute;left:1203.31px;top:289px;width:1.2px;height:17px;background:#bdbdbd"></div>
<div style="position:absolute;left:1212.89px;top:289px;width:1.2px;height:17px;background:#bdbdbd"></div>
<div style="position:absolute;left:1222.47px;top:289px;width:1.2px;height:17px;background:#bdbdbd"></div>
<div style="position:absolute;left:1232.06px;top:289px;width:1.2px;height:17px;background:#bdbdbd"></div>
<div style="position:absolute;left:1241.64px;top:289px;width:1.2px;height:17px;background:#bdbdbd"></div>
<div style="position:absolute;left:1251.23px;top:289px;width:1.2px;height:17px;background:#bdbdbd"></div>
<div style="position:absolute;left:1260.81px;top:289px;width:1.2px;height:17px;background:#bdbdbd"></div>
<div style="position:absolute;left:1270.39px;top:289px;width:1.2px;height:17px;background:#bdbdbd"></div>
<div style="position:absolute;left:1279.98px;top:289px;width:1.2px;height:17px;background:#bdbdbd"></div>
<div style="position:absolute;left:1289.56px;top:289px;width:1.2px;height:17px;background:#bdbdbd"></div>
<div style="position:absolute;left:1299.15px;top:289px;width:1.2px;height:17px;background:#bdbdbd"></div>
<div style="position:absolute;left:1308.73px;top:289px;width:1.2px;height:17px;background:#bdbdbd"></div>
<div style="position:absolute;left:1318.32px;top:289px;width:1.2px;height:17px;background:#bdbdbd"></div>
<div style="position:absolute;left:1327.9px;top:289px;width:1.2px;height:17px;background:#bdbdbd"></div>
<div style="position:absolute;left:0;top:289px;width:1329px;height:17px;overflow:hidden;font-size:11px;line-height:14px;color:#1a1a1a;white-space:pre">
<div style="position:absolute;left:609.90px;top:1.8px;width:9.50px;text-align:center;overflow:hidden">A</div>
<div style="position:absolute;left:619.40px;top:1.8px;width:10.00px;text-align:center;overflow:hidden">B</div>
<div style="position:absolute;left:629.40px;top:1.8px;width:8.20px;text-align:center;overflow:hidden">C</div>
<div style="position:absolute;left:637.60px;top:1.8px;width:9.70px;text-align:center;overflow:hidden">D</div>
<div style="position:absolute;left:647.30px;top:1.8px;width:9.20px;text-align:center;overflow:hidden">E</div>
<div style="position:absolute;left:656.50px;top:1.8px;width:9.90px;text-align:center;overflow:hidden">F</div>
<div style="position:absolute;left:666.40px;top:1.8px;width:9.00px;text-align:center;overflow:hidden">G</div>
<div style="position:absolute;left:675.40px;top:1.8px;width:10.10px;text-align:center;overflow:hidden">H</div>
<div style="position:absolute;left:685.50px;top:1.8px;width:9.80px;text-align:center;overflow:hidden">I</div>
<div style="position:absolute;left:695.30px;top:1.8px;width:9.62px;text-align:center;overflow:hidden">J</div>
<div style="position:absolute;left:704.92px;top:1.8px;width:9.62px;text-align:center;overflow:hidden">K</div>
<div style="position:absolute;left:714.54px;top:1.8px;width:9.62px;text-align:center;overflow:hidden">L</div>
<div style="position:absolute;left:724.16px;top:1.8px;width:9.62px;text-align:center;overflow:hidden">M</div>
<div style="position:absolute;left:733.77px;top:1.8px;width:9.62px;text-align:center;overflow:hidden">N</div>
<div style="position:absolute;left:743.39px;top:1.8px;width:9.62px;text-align:center;overflow:hidden">O</div>
<div style="position:absolute;left:753.01px;top:1.8px;width:9.62px;text-align:center;overflow:hidden">P</div>
<div style="position:absolute;left:762.63px;top:1.8px;width:9.62px;text-align:center;overflow:hidden">Q</div>
<div style="position:absolute;left:772.25px;top:1.8px;width:9.62px;text-align:center;overflow:hidden">R</div>
<div style="position:absolute;left:781.87px;top:1.8px;width:9.62px;text-align:center;overflow:hidden">S</div>
<div style="position:absolute;left:791.49px;top:1.8px;width:9.62px;text-align:center;overflow:hidden">T</div>
<div style="position:absolute;left:801.11px;top:1.8px;width:9.62px;text-align:center;overflow:hidden">U</div>
<div style="position:absolute;left:810.73px;top:1.8px;width:9.62px;text-align:center;overflow:hidden">V</div>
<div style="position:absolute;left:820.34px;top:1.8px;width:9.62px;text-align:center;overflow:hidden">W</div>
<div style="position:absolute;left:829.96px;top:1.8px;width:9.62px;text-align:center;overflow:hidden">X</div>
<div style="position:absolute;left:839.58px;top:1.8px;width:9.62px;text-align:center;overflow:hidden">Y</div>
<div style="position:absolute;left:849.20px;top:1.8px;width:9.59px;text-align:center;overflow:hidden">Z</div>
<div style="position:absolute;left:859.09px;top:1.8px;width:9.29px;overflow:hidden;letter-spacing:-0.5px">AA</div>
<div style="position:absolute;left:868.67px;top:1.8px;width:9.29px;overflow:hidden;letter-spacing:-0.5px">AB</div>
<div style="position:absolute;left:878.26px;top:1.8px;width:9.29px;overflow:hidden;letter-spacing:-0.5px">AC</div>
<div style="position:absolute;left:887.85px;top:1.8px;width:9.29px;overflow:hidden;letter-spacing:-0.5px">AD</div>
<div style="position:absolute;left:897.44px;top:1.8px;width:9.29px;overflow:hidden;letter-spacing:-0.5px">AE</div>
<div style="position:absolute;left:907.02px;top:1.8px;width:9.29px;overflow:hidden;letter-spacing:-0.5px">AF</div>
<div style="position:absolute;left:916.61px;top:1.8px;width:9.29px;overflow:hidden;letter-spacing:-0.5px">AG</div>
<div style="position:absolute;left:926.20px;top:1.8px;width:9.29px;overflow:hidden;letter-spacing:-0.5px">AH</div>
<div style="position:absolute;left:935.78px;top:1.8px;width:9.29px;overflow:hidden;letter-spacing:-0.5px">AI</div>
<div style="position:absolute;left:945.37px;top:1.8px;width:9.29px;overflow:hidden;letter-spacing:-0.5px">AJ</div>
<div style="position:absolute;left:954.96px;top:1.8px;width:9.29px;overflow:hidden;letter-spacing:-0.5px">AK</div>
<div style="position:absolute;left:964.55px;top:1.8px;width:9.29px;overflow:hidden;letter-spacing:-0.5px">AL</div>
<div style="position:absolute;left:974.13px;top:1.8px;width:9.29px;overflow:hidden;letter-spacing:-0.5px">AM</div>
<div style="position:absolute;left:983.72px;top:1.8px;width:9.29px;overflow:hidden;letter-spacing:-0.5px">AN</div>
<div style="position:absolute;left:993.31px;top:1.8px;width:9.29px;overflow:hidden;letter-spacing:-0.5px">AO</div>
<div style="position:absolute;left:1002.89px;top:1.8px;width:9.29px;overflow:hidden;letter-spacing:-0.5px">AP</div>
<div style="position:absolute;left:1012.48px;top:1.8px;width:9.29px;overflow:hidden;letter-spacing:-0.5px">AQ</div>
<div style="position:absolute;left:1022.07px;top:1.8px;width:9.29px;overflow:hidden;letter-spacing:-0.5px">AR</div>
<div style="position:absolute;left:1031.65px;top:1.8px;width:9.29px;overflow:hidden;letter-spacing:-0.5px">AS</div>
<div style="position:absolute;left:1041.24px;top:1.8px;width:9.29px;overflow:hidden;letter-spacing:-0.5px">AT</div>
<div style="position:absolute;left:1050.83px;top:1.8px;width:9.29px;overflow:hidden;letter-spacing:-0.5px">AU</div>
<div style="position:absolute;left:1060.42px;top:1.8px;width:9.29px;overflow:hidden;letter-spacing:-0.5px">AV</div>
<div style="position:absolute;left:1070.00px;top:1.8px;width:9.29px;overflow:hidden;letter-spacing:-0.5px">AW</div>
<div style="position:absolute;left:1079.59px;top:1.8px;width:9.29px;overflow:hidden;letter-spacing:-0.5px">AX</div>
<div style="position:absolute;left:1089.18px;top:1.8px;width:9.29px;overflow:hidden;letter-spacing:-0.5px">AY</div>
<div style="position:absolute;left:1098.76px;top:1.8px;width:9.29px;overflow:hidden;letter-spacing:-0.5px">AZ</div>
<div style="position:absolute;left:1108.35px;top:1.8px;width:9.29px;overflow:hidden;letter-spacing:-0.5px">BA</div>
<div style="position:absolute;left:1117.94px;top:1.8px;width:9.29px;overflow:hidden;letter-spacing:-0.5px">BB</div>
<div style="position:absolute;left:1127.53px;top:1.8px;width:9.29px;overflow:hidden;letter-spacing:-0.5px">BC</div>
<div style="position:absolute;left:1137.11px;top:1.8px;width:9.29px;overflow:hidden;letter-spacing:-0.5px">BD</div>
<div style="position:absolute;left:1146.70px;top:1.8px;width:9.28px;overflow:hidden;letter-spacing:-0.5px">BE</div>
<div style="position:absolute;left:1156.28px;top:1.8px;width:9.28px;overflow:hidden;letter-spacing:-0.5px">BF</div>
<div style="position:absolute;left:1165.87px;top:1.8px;width:9.28px;overflow:hidden;letter-spacing:-0.5px">BG</div>
<div style="position:absolute;left:1175.45px;top:1.8px;width:9.28px;overflow:hidden;letter-spacing:-0.5px">BH</div>
<div style="position:absolute;left:1185.04px;top:1.8px;width:9.28px;overflow:hidden;letter-spacing:-0.5px">BI</div>
<div style="position:absolute;left:1194.62px;top:1.8px;width:9.28px;overflow:hidden;letter-spacing:-0.5px">BJ</div>
<div style="position:absolute;left:1204.21px;top:1.8px;width:9.28px;overflow:hidden;letter-spacing:-0.5px">BK</div>
<div style="position:absolute;left:1213.79px;top:1.8px;width:9.28px;overflow:hidden;letter-spacing:-0.5px">BL</div>
<div style="position:absolute;left:1223.37px;top:1.8px;width:9.28px;overflow:hidden;letter-spacing:-0.5px">BM</div>
<div style="position:absolute;left:1232.96px;top:1.8px;width:9.28px;overflow:hidden;letter-spacing:-0.5px">BN</div>
<div style="position:absolute;left:1242.54px;top:1.8px;width:9.28px;overflow:hidden;letter-spacing:-0.5px">BO</div>
<div style="position:absolute;left:1252.13px;top:1.8px;width:9.28px;overflow:hidden;letter-spacing:-0.5px">BP</div>
<div style="position:absolute;left:1261.71px;top:1.8px;width:9.28px;overflow:hidden;letter-spacing:-0.5px">BQ</div>
<div style="position:absolute;left:1271.29px;top:1.8px;width:9.28px;overflow:hidden;letter-spacing:-0.5px">BR</div>
<div style="position:absolute;left:1280.88px;top:1.8px;width:9.28px;overflow:hidden;letter-spacing:-0.5px">BS</div>
<div style="position:absolute;left:1290.46px;top:1.8px;width:9.28px;overflow:hidden;letter-spacing:-0.5px">BT</div>
<div style="position:absolute;left:1300.05px;top:1.8px;width:9.28px;overflow:hidden;letter-spacing:-0.5px">BU</div>
<div style="position:absolute;left:1309.63px;top:1.8px;width:9.28px;overflow:hidden;letter-spacing:-0.5px">BV</div>
<div style="position:absolute;left:1319.22px;top:1.8px;width:9.28px;overflow:hidden;letter-spacing:-0.5px">BW</div>
</div>
<div style="position:absolute;left:592px;top:305.5px;width:737px;height:1.2px;background:#b8b8b8"></div>
<div style="position:absolute;left:592px;top:306px;width:18px;height:600px;background:#fff"></div>
<div style="position:absolute;left:609.3px;top:289px;width:1px;height:601px;background:#c2c2c2"></div>
<div style="position:absolute;left:591.5px;top:289px;width:1px;height:601px;background:#d6d6d6"></div>
<div style="position:absolute;left:592px;top:378.9px;width:17.8px;height:1px;background:#c8c8c8"></div>
<div style="position:absolute;left:592px;top:306.30px;width:17.5px;height:73.10px;overflow:hidden">
<div style="position:absolute;left:-10px;width:37.5px;text-align:center;top:29.05px;font-size:11px;line-height:14px;color:#1a1a1a">1</div></div>
<div style="position:absolute;left:592px;top:388.7px;width:17.8px;height:1px;background:#c8c8c8"></div>
<div style="position:absolute;left:592px;top:379.90px;width:17.5px;height:9.30px;overflow:hidden">
<div style="position:absolute;left:-10px;width:37.5px;text-align:center;top:-3.55px;font-size:11px;line-height:14px;color:#1a1a1a">2</div></div>
<div style="position:absolute;left:592px;top:404.7px;width:17.8px;height:1px;background:#c8c8c8"></div>
<div style="position:absolute;left:592px;top:389.70px;width:17.5px;height:15.50px;overflow:hidden">
<div style="position:absolute;left:-10px;width:37.5px;text-align:center;top:-0.35px;font-size:11px;line-height:14px;color:#1a1a1a">3</div></div>
<div style="position:absolute;left:592px;top:422.8px;width:17.8px;height:1px;background:#c8c8c8"></div>
<div style="position:absolute;left:592px;top:405.70px;width:17.5px;height:17.60px;overflow:hidden">
<div style="position:absolute;left:-10px;width:37.5px;text-align:center;top:0.65px;font-size:11px;line-height:14px;color:#1a1a1a">4</div></div>
<div style="position:absolute;left:592px;top:439.8px;width:17.8px;height:1px;background:#c8c8c8"></div>
<div style="position:absolute;left:592px;top:423.80px;width:17.5px;height:16.50px;overflow:hidden">
<div style="position:absolute;left:-10px;width:37.5px;text-align:center;top:0.55px;font-size:11px;line-height:14px;color:#1a1a1a">5</div></div>
<div style="position:absolute;left:592px;top:450.7px;width:17.8px;height:1px;background:#c8c8c8"></div>
<div style="position:absolute;left:592px;top:440.80px;width:17.5px;height:10.40px;overflow:hidden">
<div style="position:absolute;left:-10px;width:37.5px;text-align:center;top:-2.45px;font-size:11px;line-height:14px;color:#1a1a1a">6</div></div>
<div style="position:absolute;left:592px;top:464.9px;width:17.8px;height:1px;background:#c8c8c8"></div>
<div style="position:absolute;left:592px;top:451.70px;width:17.5px;height:13.70px;overflow:hidden">
<div style="position:absolute;left:-10px;width:37.5px;text-align:center;top:-1.35px;font-size:11px;line-height:14px;color:#1a1a1a">7</div></div>
<div style="position:absolute;left:592px;top:478.6px;width:17.8px;height:1px;background:#c8c8c8"></div>
<div style="position:absolute;left:592px;top:465.90px;width:17.5px;height:13.20px;overflow:hidden">
<div style="position:absolute;left:-10px;width:37.5px;text-align:center;top:-1.55px;font-size:11px;line-height:14px;color:#1a1a1a">8</div></div>
<div style="position:absolute;left:592px;top:489.8px;width:17.8px;height:1px;background:#c8c8c8"></div>
<div style="position:absolute;left:592px;top:479.60px;width:17.5px;height:10.70px;overflow:hidden">
<div style="position:absolute;left:-10px;width:37.5px;text-align:center;top:-2.25px;font-size:11px;line-height:14px;color:#1a1a1a">9</div></div>
<div style="position:absolute;left:592px;top:504.1px;width:17.8px;height:1px;background:#c8c8c8"></div>
<div style="position:absolute;left:592px;top:490.80px;width:17.5px;height:13.80px;overflow:hidden">
<div style="position:absolute;left:-10px;width:37.5px;text-align:center;top:-0.45px;font-size:11px;line-height:14px;color:#1a1a1a">10</div></div>
<div style="position:absolute;left:592px;top:523.8px;width:17.8px;height:1px;background:#c8c8c8"></div>
<div style="position:absolute;left:592px;top:505.10px;width:17.5px;height:19.20px;overflow:hidden">
<div style="position:absolute;left:-10px;width:37.5px;text-align:center;top:2.25px;font-size:11px;line-height:14px;color:#1a1a1a">11</div></div>
<div style="position:absolute;left:592px;top:534.8px;width:17.8px;height:1px;background:#c8c8c8"></div>
<div style="position:absolute;left:592px;top:524.80px;width:17.5px;height:10.50px;overflow:hidden">
<div style="position:absolute;left:-10px;width:37.5px;text-align:center;top:-2.45px;font-size:11px;line-height:14px;color:#1a1a1a">12</div></div>
<div style="position:absolute;left:592px;top:550.1px;width:17.8px;height:1px;background:#c8c8c8"></div>
<div style="position:absolute;left:592px;top:535.80px;width:17.5px;height:14.80px;overflow:hidden">
<div style="position:absolute;left:-10px;width:37.5px;text-align:center;top:-0.45px;font-size:11px;line-height:14px;color:#1a1a1a">13</div></div>
<div style="position:absolute;left:592px;top:561.9px;width:17.8px;height:1px;background:#c8c8c8"></div>
<div style="position:absolute;left:592px;top:551.10px;width:17.5px;height:11.30px;overflow:hidden">
<div style="position:absolute;left:-10px;width:37.5px;text-align:center;top:-1.75px;font-size:11px;line-height:14px;color:#1a1a1a">14</div></div>
<div style="position:absolute;left:592px;top:573.9px;width:17.8px;height:1px;background:#c8c8c8"></div>
<div style="position:absolute;left:592px;top:562.90px;width:17.5px;height:11.50px;overflow:hidden">
<div style="position:absolute;left:-10px;width:37.5px;text-align:center;top:-1.55px;font-size:11px;line-height:14px;color:#1a1a1a">15</div></div>
<div style="position:absolute;left:592px;top:585.9px;width:17.8px;height:1px;background:#c8c8c8"></div>
<div style="position:absolute;left:592px;top:574.90px;width:17.5px;height:11.50px;overflow:hidden">
<div style="position:absolute;left:-10px;width:37.5px;text-align:center;top:-1.55px;font-size:11px;line-height:14px;color:#1a1a1a">16</div></div>
<div style="position:absolute;left:592px;top:601.7px;width:17.8px;height:1px;background:#c8c8c8"></div>
<div style="position:absolute;left:592px;top:586.90px;width:17.5px;height:15.30px;overflow:hidden">
<div style="position:absolute;left:-10px;width:37.5px;text-align:center;top:0.45px;font-size:11px;line-height:14px;color:#1a1a1a">17</div></div>
<div style="position:absolute;left:592px;top:638.6px;width:17.8px;height:1px;background:#c8c8c8"></div>
<div style="position:absolute;left:592px;top:602.70px;width:17.5px;height:36.40px;overflow:hidden">
<div style="position:absolute;left:-10px;width:37.5px;text-align:center;top:10.65px;font-size:11px;line-height:14px;color:#1a1a1a">18</div></div>
<div style="position:absolute;left:592px;top:649.8px;width:17.8px;height:1px;background:#c8c8c8"></div>
<div style="position:absolute;left:592px;top:639.60px;width:17.5px;height:10.70px;overflow:hidden">
<div style="position:absolute;left:-10px;width:37.5px;text-align:center;top:-2.25px;font-size:11px;line-height:14px;color:#1a1a1a">19</div></div>
<div style="position:absolute;left:592px;top:685.0px;width:17.8px;height:1px;background:#c8c8c8"></div>
<div style="position:absolute;left:592px;top:650.80px;width:17.5px;height:34.70px;overflow:hidden">
<div style="position:absolute;left:-10px;width:37.5px;text-align:center;top:9.55px;font-size:11px;line-height:14px;color:#1a1a1a">20</div></div>
<div style="position:absolute;left:592px;top:699.9px;width:17.8px;height:1px;background:#c8c8c8"></div>
<div style="position:absolute;left:592px;top:686.00px;width:17.5px;height:14.40px;overflow:hidden">
<div style="position:absolute;left:-10px;width:37.5px;text-align:center;top:-0.65px;font-size:11px;line-height:14px;color:#1a1a1a">21</div></div>
<div style="position:absolute;left:592px;top:713.7px;width:17.8px;height:1px;background:#c8c8c8"></div>
<div style="position:absolute;left:592px;top:700.90px;width:17.5px;height:13.30px;overflow:hidden">
<div style="position:absolute;left:-10px;width:37.5px;text-align:center;top:-0.55px;font-size:11px;line-height:14px;color:#1a1a1a">22</div></div>
<div style="position:absolute;left:592px;top:728.8px;width:17.8px;height:1px;background:#c8c8c8"></div>
<div style="position:absolute;left:592px;top:714.70px;width:17.5px;height:14.60px;overflow:hidden">
<div style="position:absolute;left:-10px;width:37.5px;text-align:center;top:-0.35px;font-size:11px;line-height:14px;color:#1a1a1a">23</div></div>
<div style="position:absolute;left:592px;top:744.8px;width:17.8px;height:1px;background:#c8c8c8"></div>
<div style="position:absolute;left:592px;top:729.80px;width:17.5px;height:15.50px;overflow:hidden">
<div style="position:absolute;left:-10px;width:37.5px;text-align:center;top:0.55px;font-size:11px;line-height:14px;color:#1a1a1a">24</div></div>
<div style="position:absolute;left:592px;top:760.1px;width:17.8px;height:1px;background:#c8c8c8"></div>
<div style="position:absolute;left:592px;top:745.80px;width:17.5px;height:14.80px;overflow:hidden">
<div style="position:absolute;left:-10px;width:37.5px;text-align:center;top:-0.45px;font-size:11px;line-height:14px;color:#1a1a1a">25</div></div>
<div style="position:absolute;left:592px;top:774.9px;width:17.8px;height:1px;background:#c8c8c8"></div>
<div style="position:absolute;left:592px;top:761.10px;width:17.5px;height:14.30px;overflow:hidden">
<div style="position:absolute;left:-10px;width:37.5px;text-align:center;top:-0.75px;font-size:11px;line-height:14px;color:#1a1a1a">26</div></div>
<div style="position:absolute;left:592px;top:789.9px;width:17.8px;height:1px;background:#c8c8c8"></div>
<div style="position:absolute;left:592px;top:775.90px;width:17.5px;height:14.50px;overflow:hidden">
<div style="position:absolute;left:-10px;width:37.5px;text-align:center;top:-0.55px;font-size:11px;line-height:14px;color:#1a1a1a">27</div></div>
<div style="position:absolute;left:592px;top:804.6px;width:17.8px;height:1px;background:#c8c8c8"></div>
<div style="position:absolute;left:592px;top:790.90px;width:17.5px;height:14.20px;overflow:hidden">
<div style="position:absolute;left:-10px;width:37.5px;text-align:center;top:-0.55px;font-size:11px;line-height:14px;color:#1a1a1a">28</div></div>
<div style="position:absolute;left:592px;top:821.7px;width:17.8px;height:1px;background:#c8c8c8"></div>
<div style="position:absolute;left:592px;top:805.60px;width:17.5px;height:16.60px;overflow:hidden">
<div style="position:absolute;left:-10px;width:37.5px;text-align:center;top:0.75px;font-size:11px;line-height:14px;color:#1a1a1a">29</div></div>
<div style="position:absolute;left:592px;top:836.7px;width:17.8px;height:1px;background:#c8c8c8"></div>
<div style="position:absolute;left:592px;top:822.70px;width:17.5px;height:14.50px;overflow:hidden">
<div style="position:absolute;left:-10px;width:37.5px;text-align:center;top:-0.35px;font-size:11px;line-height:14px;color:#1a1a1a">30</div></div>
<div style="position:absolute;left:592px;top:850.8px;width:17.8px;height:1px;background:#c8c8c8"></div>
<div style="position:absolute;left:592px;top:837.70px;width:17.5px;height:13.60px;overflow:hidden">
<div style="position:absolute;left:-10px;width:37.5px;text-align:center;top:-1.35px;font-size:11px;line-height:14px;color:#1a1a1a">31</div></div>
<div style="position:absolute;left:592px;top:864.5px;width:17.8px;height:1px;background:#c8c8c8"></div>
<div style="position:absolute;left:592px;top:851.80px;width:17.5px;height:13.20px;overflow:hidden">
<div style="position:absolute;left:-10px;width:37.5px;text-align:center;top:-1.45px;font-size:11px;line-height:14px;color:#1a1a1a">32</div></div>
<div style="position:absolute;left:592px;top:877.3px;width:17.8px;height:1px;background:#c8c8c8"></div>
<div style="position:absolute;left:592px;top:865.50px;width:17.5px;height:12.30px;overflow:hidden">
<div style="position:absolute;left:-10px;width:37.5px;text-align:center;top:-1.15px;font-size:11px;line-height:14px;color:#1a1a1a">33</div></div>
<div style="position:absolute;left:592px;top:891.5px;width:17.8px;height:1px;background:#c8c8c8"></div>
<div style="position:absolute;left:592px;top:878.30px;width:17.5px;height:13.70px;overflow:hidden">
<div style="position:absolute;left:-10px;width:37.5px;text-align:center;top:-0.95px;font-size:11px;line-height:14px;color:#1a1a1a">34</div></div>
<div style="position:absolute;left:1329px;top:289.5px;width:15px;height:600px;background:#f1f1f1"></div>
<div style="position:absolute;left:1344px;top:116px;width:1px;height:780px;background:#c8c8c8"></div>
<div style="position:absolute;left:1328.3px;top:306px;width:1px;height:600px;background:#cdcdcd"></div>
<div style="position:absolute;left:1329px;top:307.2px;width:13px;height:69.7px;background:#c1c1c1"></div>
<svg style="left:1332px;top:296.8px" width="7.5" height="4.6" viewBox="0 0 8 5"><path fill="#a3a3a3" d="M0 4.5h8L4 0.5z"/></svg>
<svg style="left:1332px;top:869.8px" width="7.5" height="4.6" viewBox="0 0 8 5"><path fill="#505050" d="M0 0.5h8L4 4.5z"/></svg>
<div style="position:absolute;white-space:pre;top:307.99px;font-size:11.72px;color:#000;font-family:'Liberation Serif',serif;line-height:11.72px;left:544.2px;width:600px;text-align:right;">ЗАТВЕРДЖЕНО</div>
<div style="position:absolute;white-space:pre;top:320.99px;font-size:11.72px;color:#000;font-family:'Liberation Serif',serif;line-height:11.72px;left:544.2px;width:600px;text-align:right;">Наказ Міністерства фінансів України</div>
<div style="position:absolute;white-space:pre;top:333.99px;font-size:11.72px;color:#000;font-family:'Liberation Serif',serif;line-height:11.72px;left:544.2px;width:600px;text-align:right;">23 січня 2015 року N 14</div>
<div style="position:absolute;white-space:pre;top:346.99px;font-size:11.72px;color:#000;font-family:'Liberation Serif',serif;line-height:11.72px;left:544.2px;width:600px;text-align:right;">(у редакції наказу Міністерства фінансів України від 26 вересня 2016 року № 841)</div>
<div style="position:absolute;white-space:pre;top:359.99px;font-size:11.72px;color:#000;font-family:'Liberation Serif',serif;line-height:11.72px;left:544.2px;width:600px;text-align:right;">(зі змінами внесеними наказом Міністерства фінансів України  від 31 травня 2022 року № 151)</div>
<div style="position:absolute;left:610.30px;top:388.90px;width:536.70px;height:51.90px;border:1.2px solid #000"></div>
<div style="position:absolute;left:636.85px;top:389.5px;width:1.1px;height:50.7px;background:#000"></div>
<div style="position:absolute;left:972.85px;top:389.5px;width:1.1px;height:50.7px;background:#000"></div>
<div style="position:absolute;left:1010.75px;top:389.5px;width:1.1px;height:50.7px;background:#000"></div>
<div style="position:absolute;left:1039.85px;top:389.5px;width:1.1px;height:50.7px;background:#000"></div>
<div style="position:absolute;left:973.4px;top:403.85px;width:173.0px;height:1.1px;background:#000"></div>
<div style="position:absolute;left:973.4px;top:422.75px;width:173.0px;height:1.1px;background:#000"></div>
<div style="position:absolute;left:1011.9px;top:423.9px;width:27.9px;height:15.7px;background:#ffffe1"></div>
<div style="position:absolute;white-space:pre;top:389.99px;font-size:11.72px;color:#000;font-family:'Liberation Serif',serif;line-height:11.72px;left:323px;width:600px;text-align:center;">01</div>
<div style="position:absolute;white-space:pre;top:408.99px;font-size:11.72px;color:#000;font-family:'Liberation Serif',serif;font-weight:700;line-height:11.72px;letter-spacing:-0.034px;left:503px;width:600px;text-align:center;margin-left:-0.017px;">ДЕКЛАРАЦІЯ АКЦИЗНОГО ПОДАТКУ</div>
<div style="position:absolute;white-space:pre;top:390.99px;font-size:11.72px;color:#000;font-family:'Liberation Serif',serif;line-height:11.72px;left:691.6px;width:600px;text-align:center;">011</div>
<div style="position:absolute;white-space:pre;top:407.99px;font-size:11.72px;color:#000;font-family:'Liberation Serif',serif;line-height:11.72px;left:691.6px;width:600px;text-align:center;">012</div>
<div style="position:absolute;white-space:pre;top:425.99px;font-size:11.72px;color:#000;font-family:'Liberation Serif',serif;line-height:11.72px;left:691.6px;width:600px;text-align:center;">013</div>
<div style="position:absolute;white-space:pre;top:407.99px;font-size:11.72px;color:#000;font-family:'Liberation Serif',serif;line-height:11.72px;left:725.8px;width:600px;text-align:center;">X</div>
<div style="position:absolute;white-space:pre;top:390.99px;font-size:11.72px;color:#000;font-family:'Liberation Serif',serif;line-height:11.72px;left:1041.7px;">Звітна</div>
<div style="position:absolute;white-space:pre;top:407.99px;font-size:11.72px;color:#000;font-family:'Liberation Serif',serif;line-height:11.72px;left:1041.7px;">Звітна нова</div>
<div style="position:absolute;white-space:pre;top:425.99px;font-size:11.72px;color:#000;font-family:'Liberation Serif',serif;line-height:11.72px;left:1041.7px;">Уточнююча</div>
<svg style="left:1035.70px;top:390.10px" width="4.2" height="4.2" viewBox="0 0 10 10"><path fill="#f01818" d="M0 0H10V10z"/></svg>
<svg style="left:1035.70px;top:405.00px" width="4.2" height="4.2" viewBox="0 0 10 10"><path fill="#f01818" d="M0 0H10V10z"/></svg>
<div style="position:absolute;left:610.30px;top:450.70px;width:536.70px;height:29.10px;border:1.2px solid #000"></div>
<div style="position:absolute;left:636.85px;top:451.3px;width:1.1px;height:27.9px;background:#000"></div>
<div style="position:absolute;left:818.95px;top:451.3px;width:1.1px;height:27.9px;background:#000"></div>
<div style="position:absolute;left:972.85px;top:451.3px;width:1.1px;height:27.9px;background:#000"></div>
<div style="position:absolute;left:973.4px;top:463.75px;width:173.0px;height:1.1px;background:#000"></div>
<div style="position:absolute;left:1029.65px;top:451.3px;width:1.1px;height:13.0px;background:#000"></div>
<div style="position:absolute;white-space:pre;top:451.99px;font-size:11.72px;color:#000;font-family:'Liberation Serif',serif;line-height:11.72px;left:323.20000000000005px;width:600px;text-align:center;">02</div>
<div style="position:absolute;white-space:pre;top:451.99px;font-size:11.72px;color:#000;font-family:'Liberation Serif',serif;line-height:11.72px;left:639px;">Звітний (податковий) період</div>
<div style="position:absolute;white-space:pre;top:452.99px;font-size:11.72px;color:#000;font-family:'Liberation Serif',serif;line-height:11.72px;left:701.8px;width:600px;text-align:center;">1</div>
<div style="position:absolute;white-space:pre;top:452.99px;font-size:11.72px;color:#000;font-family:'Liberation Serif',serif;line-height:11.72px;left:499.20000000000005px;width:600px;text-align:right;">2023</div>
<div style="position:absolute;white-space:pre;top:465.99px;font-size:11.72px;color:#000;font-family:'Liberation Serif',serif;line-height:11.72px;left:759.4000000000001px;width:600px;text-align:center;">(місяць, рік)</div>
<svg style="left:1025.50px;top:451.90px" width="4.2" height="4.2" viewBox="0 0 10 10"><path fill="#f01818" d="M0 0H10V10z"/></svg>
<div style="position:absolute;left:610.30px;top:489.80px;width:536.70px;height:35.10px;border:1.2px solid #000"></div>
<div style="position:absolute;left:636.85px;top:490.4px;width:1.1px;height:33.9px;background:#000"></div>
<div style="position:absolute;left:818.95px;top:490.4px;width:1.1px;height:33.9px;background:#000"></div>
<div style="position:absolute;left:972.85px;top:490.4px;width:1.1px;height:33.9px;background:#000"></div>
<div style="position:absolute;left:973.4px;top:503.75px;width:173.0px;height:1.1px;background:#000"></div>
<div style="position:absolute;left:1029.65px;top:490.4px;width:1.1px;height:13.9px;background:#000"></div>
<div style="position:absolute;white-space:pre;top:490.99px;font-size:11.72px;color:#000;font-family:'Liberation Serif',serif;line-height:11.72px;left:323.20000000000005px;width:600px;text-align:center;">03</div>
<div style="position:absolute;white-space:pre;top:490.99px;font-size:11.72px;color:#000;font-family:'Liberation Serif',serif;line-height:11.72px;left:639px;">Звітний (податковий) період, що</div>
<div style="position:absolute;white-space:pre;top:503.99px;font-size:11.72px;color:#000;font-family:'Liberation Serif',serif;line-height:11.72px;left:639px;">уточнюється</div>
<div style="position:absolute;white-space:pre;top:504.99px;font-size:11.72px;color:#000;font-family:'Liberation Serif',serif;line-height:11.72px;left:759.4000000000001px;width:600px;text-align:center;">(місяць, рік)</div>
<svg style="left:1025.50px;top:491.00px" width="4.2" height="4.2" viewBox="0 0 10 10"><path fill="#f01818" d="M0 0H10V10z"/></svg>
<svg style="left:1065.20px;top:491.00px" width="4.2" height="4.2" viewBox="0 0 10 10"><path fill="#f01818" d="M0 0H10V10z"/></svg>
<div style="position:absolute;left:610.30px;top:534.70px;width:536.70px;height:52.30px;border:1.2px solid #000"></div>
<div style="position:absolute;left:636.85px;top:535.3px;width:1.1px;height:51.1px;background:#000"></div>
<div style="position:absolute;white-space:pre;top:535.99px;font-size:11.72px;color:#000;font-family:'Liberation Serif',serif;line-height:11.72px;left:323.20000000000005px;width:600px;text-align:center;">04</div>
<div style="position:absolute;white-space:pre;top:535.99px;font-size:11.72px;color:#000;font-family:'Liberation Serif',serif;line-height:11.72px;left:648.3px;">Платник податку</div>
<div style="position:absolute;white-space:pre;top:536.99px;font-size:11.72px;color:#000;font-family:'Liberation Serif',serif;line-height:11.72px;left:639px;width:600px;text-align:center;">Приватне акціонерне товариство &quot;Літак&quot;</div>
<div style="position:absolute;left:741.7px;top:549.75px;width:394.9px;height:1.1px;background:#000"></div>
<div style="position:absolute;left:646.2px;top:561.85px;width:490.4px;height:1.1px;background:#000"></div>
<div style="position:absolute;left:646.2px;top:573.85px;width:490.4px;height:1.1px;background:#000"></div>
<div style="position:absolute;white-space:pre;top:587.05px;font-size:9.6px;color:#000;font-family:'Liberation Serif',serif;line-height:9.6px;left:577.8px;width:600px;text-align:center;margin-left:-0.001px;">(повне найменування (прізвище, ім&#x27;я, по батькові) платника податків згідно з реєстраційними документами)</div>
<div style="position:absolute;left:610.30px;top:601.60px;width:536.70px;height:38.20px;border:1.2px solid #000"></div>
<div style="position:absolute;left:636.85px;top:602.2px;width:1.1px;height:37.0px;background:#000"></div>
<div style="position:absolute;left:963.05px;top:602.2px;width:1.1px;height:37.0px;background:#000"></div>
<div style="position:absolute;white-space:pre;top:602.99px;font-size:11.72px;color:#000;font-family:'Liberation Serif',serif;line-height:11.72px;left:322.70000000000005px;width:600px;text-align:center;">041</div>
<div style="position:absolute;white-space:pre;top:602.99px;font-size:11.72px;color:#000;font-family:'Liberation Serif',serif;line-height:11.72px;left:639px;">Податковий номер платника податку1 або серія (за наявності) та</div>
<div style="position:absolute;white-space:pre;top:615.99px;font-size:11.72px;color:#000;font-family:'Liberation Serif',serif;line-height:11.72px;left:639px;">номер паспорта2</div>
<div style="position:absolute;white-space:pre;top:614.99px;font-size:11.72px;color:#000;font-family:'Liberation Serif',serif;line-height:11.72px;left:754.5px;width:600px;text-align:center;">34554351</div>
<div style="position:absolute;left:610.30px;top:649.70px;width:536.70px;height:64.90px;border:1.2px solid #000"></div>
<div style="position:absolute;left:628.75px;top:650.3px;width:1.1px;height:63.7px;background:#000"></div>
<div style="position:absolute;left:704.05px;top:650.3px;width:1.1px;height:63.7px;background:#000"></div>
<div style="position:absolute;left:704.6px;top:684.85px;width:441.8px;height:1.1px;background:#000"></div>
<div style="position:absolute;left:704.6px;top:699.75px;width:441.8px;height:1.1px;background:#000"></div>
<div style="position:absolute;left:732.75px;top:685.4px;width:1.1px;height:28.6px;background:#000"></div>
<div style="position:absolute;left:761.65px;top:685.4px;width:1.1px;height:28.6px;background:#000"></div>
<div style="position:absolute;left:799.55px;top:685.4px;width:1.1px;height:28.6px;background:#000"></div>
<div style="position:absolute;left:838.05px;top:685.4px;width:1.1px;height:28.6px;background:#000"></div>
<div style="position:absolute;left:876.85px;top:685.4px;width:1.1px;height:28.6px;background:#000"></div>
<div style="position:absolute;left:914.75px;top:685.4px;width:1.1px;height:28.6px;background:#000"></div>
<div style="position:absolute;left:953.75px;top:685.4px;width:1.1px;height:28.6px;background:#000"></div>
<div style="position:absolute;left:991.95px;top:685.4px;width:1.1px;height:28.6px;background:#000"></div>
<div style="position:absolute;left:1030.15px;top:685.4px;width:1.1px;height:28.6px;background:#000"></div>
<div style="position:absolute;left:1058.75px;top:700.3px;width:1.1px;height:13.7px;background:#000"></div>
<div style="position:absolute;left:1087.75px;top:685.4px;width:1.1px;height:28.6px;background:#000"></div>
<div style="position:absolute;left:1116.85px;top:685.4px;width:1.1px;height:28.6px;background:#000"></div>
<div style="position:absolute;white-space:pre;top:650.99px;font-size:11.72px;color:#000;font-family:'Liberation Serif',serif;line-height:11.72px;left:319px;width:600px;text-align:center;">05</div>
<div style="position:absolute;white-space:pre;top:656.99px;font-size:11.72px;color:#000;font-family:'Liberation Serif',serif;line-height:11.72px;left:366.79999999999995px;width:600px;text-align:center;">Вид</div>
<div style="position:absolute;white-space:pre;top:669.99px;font-size:11.72px;color:#000;font-family:'Liberation Serif',serif;line-height:11.72px;left:366.79999999999995px;width:600px;text-align:center;">платника</div>
<div style="position:absolute;white-space:pre;top:682.99px;font-size:11.72px;color:#000;font-family:'Liberation Serif',serif;line-height:11.72px;left:366.79999999999995px;width:600px;text-align:center;">акцизного</div>
<div style="position:absolute;white-space:pre;top:695.99px;font-size:11.72px;color:#000;font-family:'Liberation Serif',serif;line-height:11.72px;left:366.79999999999995px;width:600px;text-align:center;">податку</div>
<div style="position:absolute;white-space:pre;top:650.99px;font-size:11.72px;color:#000;font-family:'Liberation Serif',serif;line-height:11.72px;left:624.7px;width:600px;text-align:center;margin-left:0.002px;">відповідно до пункту 212.1 статті 212 розділу VI Податкового кодексу України (далі -</div>
<div style="position:absolute;white-space:pre;top:663.99px;font-size:11.72px;color:#000;font-family:'Liberation Serif',serif;line-height:11.72px;left:624.7px;width:600px;text-align:center;">Кодекс)3</div>
<div style="position:absolute;left:705.20px;top:686px;width:27.50px;height:13.7px;overflow:hidden">
<div style="position:absolute;white-space:pre;top:-0.79px;font-size:10.5px;color:#000;font-family:'Liberation Serif',serif;line-height:10.5px;left:-286.25000000000006px;width:600px;text-align:center;transform:scaleX(0.82);transform-origin:50% 0;">212.1.1</div>
</div>
<svg style="left:729.60px;top:700.90px" width="3.2" height="3.2" viewBox="0 0 10 10"><path fill="#f01818" d="M0 0H10V10z"/></svg>
<div style="position:absolute;left:733.90px;top:686px;width:27.70px;height:13.7px;overflow:hidden">
<div style="position:absolute;white-space:pre;top:-0.79px;font-size:10.5px;color:#000;font-family:'Liberation Serif',serif;line-height:10.5px;left:-286.15px;width:600px;text-align:center;transform:scaleX(0.82);transform-origin:50% 0;">212.1.2</div>
</div>
<svg style="left:758.50px;top:700.90px" width="3.2" height="3.2" viewBox="0 0 10 10"><path fill="#f01818" d="M0 0H10V10z"/></svg>
<div style="position:absolute;left:762.80px;top:686px;width:36.70px;height:13.7px;overflow:hidden">
<div style="position:absolute;white-space:pre;top:-0.79px;font-size:10.5px;color:#000;font-family:'Liberation Serif',serif;line-height:10.5px;left:-281.65000000000003px;width:600px;text-align:center;transform:scaleX(0.82);transform-origin:50% 0;">212.1.4</div>
</div>
<svg style="left:796.40px;top:700.90px" width="3.2" height="3.2" viewBox="0 0 10 10"><path fill="#f01818" d="M0 0H10V10z"/></svg>
<div style="position:absolute;left:800.70px;top:686px;width:37.30px;height:13.7px;overflow:hidden">
<div style="position:absolute;white-space:pre;top:-0.79px;font-size:10.5px;color:#000;font-family:'Liberation Serif',serif;line-height:10.5px;left:-281.35px;width:600px;text-align:center;transform:scaleX(0.82);transform-origin:50% 0;">212.1.5</div>
</div>
<svg style="left:834.90px;top:700.90px" width="3.2" height="3.2" viewBox="0 0 10 10"><path fill="#f01818" d="M0 0H10V10z"/></svg>
<div style="position:absolute;left:839.20px;top:686px;width:37.60px;height:13.7px;overflow:hidden">
<div style="position:absolute;white-space:pre;top:-0.79px;font-size:10.5px;color:#000;font-family:'Liberation Serif',serif;line-height:10.5px;left:-281.20000000000005px;width:600px;text-align:center;transform:scaleX(0.82);transform-origin:50% 0;">212.1.6</div>
</div>
<svg style="left:873.70px;top:700.90px" width="3.2" height="3.2" viewBox="0 0 10 10"><path fill="#f01818" d="M0 0H10V10z"/></svg>
<div style="position:absolute;left:878.00px;top:686px;width:36.70px;height:13.7px;overflow:hidden">
<div style="position:absolute;white-space:pre;top:-0.79px;font-size:10.5px;color:#000;font-family:'Liberation Serif',serif;line-height:10.5px;left:-281.65000000000003px;width:600px;text-align:center;transform:scaleX(0.82);transform-origin:50% 0;">212.1.7</div>
</div>
<svg style="left:911.60px;top:700.90px" width="3.2" height="3.2" viewBox="0 0 10 10"><path fill="#f01818" d="M0 0H10V10z"/></svg>
<div style="position:absolute;left:915.90px;top:686px;width:37.80px;height:13.7px;overflow:hidden">
<div style="position:absolute;white-space:pre;top:-0.79px;font-size:10.5px;color:#000;font-family:'Liberation Serif',serif;line-height:10.5px;left:-281.1px;width:600px;text-align:center;transform:scaleX(0.82);transform-origin:50% 0;">212.1.8</div>
</div>
<svg style="left:950.60px;top:700.90px" width="3.2" height="3.2" viewBox="0 0 10 10"><path fill="#f01818" d="M0 0H10V10z"/></svg>
<div style="position:absolute;left:954.90px;top:686px;width:37.00px;height:13.7px;overflow:hidden">
<div style="position:absolute;white-space:pre;top:-0.79px;font-size:10.5px;color:#000;font-family:'Liberation Serif',serif;line-height:10.5px;left:-281.5px;width:600px;text-align:center;transform:scaleX(0.82);transform-origin:50% 0;">212.1.11</div>
</div>
<div style="position:absolute;white-space:pre;top:701.95px;font-size:9.8px;color:#000;font-family:'Liberation Serif',serif;line-height:9.8px;left:673.4px;width:600px;text-align:center;">Х</div>
<svg style="left:988.80px;top:700.90px" width="3.2" height="3.2" viewBox="0 0 10 10"><path fill="#f01818" d="M0 0H10V10z"/></svg>
<div style="position:absolute;left:993.10px;top:686px;width:37.00px;height:13.7px;overflow:hidden">
<div style="position:absolute;white-space:pre;top:-0.79px;font-size:10.5px;color:#000;font-family:'Liberation Serif',serif;line-height:10.5px;left:-281.5px;width:600px;text-align:center;transform:scaleX(0.82);transform-origin:50% 0;">212.1.13</div>
</div>
<div style="position:absolute;white-space:pre;top:701.95px;font-size:9.8px;color:#000;font-family:'Liberation Serif',serif;line-height:9.8px;left:711.6px;width:600px;text-align:center;">Х</div>
<svg style="left:1027.00px;top:700.90px" width="3.2" height="3.2" viewBox="0 0 10 10"><path fill="#f01818" d="M0 0H10V10z"/></svg>
<div style="position:absolute;left:1031.30px;top:686px;width:27.40px;height:13.7px;overflow:hidden">
<div style="position:absolute;white-space:pre;top:-0.79px;font-size:10.5px;color:#000;font-family:'Liberation Serif',serif;line-height:10.5px;left:0.6px;transform:scaleX(0.82);transform-origin:0 0;">212.1.14</div>
</div>
<svg style="left:1055.60px;top:700.90px" width="3.2" height="3.2" viewBox="0 0 10 10"><path fill="#f01818" d="M0 0H10V10z"/></svg>
<div style="position:absolute;left:1066.40px;top:686px;width:21.30px;height:13.7px;overflow:hidden">
<div style="position:absolute;white-space:pre;top:-0.79px;font-size:10.5px;color:#000;font-family:'Liberation Serif',serif;line-height:10.5px;left:-579.0px;width:600px;text-align:right;transform:scaleX(0.82);transform-origin:100% 0;">212.1.15</div>
</div>
<svg style="left:1064.40px;top:700.90px" width="3.2" height="3.2" viewBox="0 0 10 10"><path fill="#f01818" d="M0 0H10V10z"/></svg>
<div style="position:absolute;left:1088.90px;top:686px;width:27.90px;height:13.7px;overflow:hidden">
<div style="position:absolute;white-space:pre;top:-0.79px;font-size:10.5px;color:#000;font-family:'Liberation Serif',serif;line-height:10.5px;left:0.6px;transform:scaleX(0.82);transform-origin:0 0;">212.1.16</div>
</div>
<svg style="left:1113.70px;top:700.90px" width="3.2" height="3.2" viewBox="0 0 10 10"><path fill="#f01818" d="M0 0H10V10z"/></svg>
<div style="position:absolute;left:1118.00px;top:686px;width:27.80px;height:13.7px;overflow:hidden">
<div style="position:absolute;white-space:pre;top:-0.79px;font-size:10.5px;color:#000;font-family:'Liberation Serif',serif;line-height:10.5px;left:0.6px;transform:scaleX(0.82);transform-origin:0 0;">212.1.17</div>
</div>
<div style="position:absolute;white-space:pre;top:701.95px;font-size:9.8px;color:#000;font-family:'Liberation Serif',serif;line-height:9.8px;left:831.9000000000001px;width:600px;text-align:center;">Х</div>
<svg style="left:1142.70px;top:700.90px" width="3.2" height="3.2" viewBox="0 0 10 10"><path fill="#f01818" d="M0 0H10V10z"/></svg>
<div style="position:absolute;white-space:pre;top:715.05px;font-size:9.6px;color:#000;font-family:'Liberation Serif',serif;line-height:9.6px;letter-spacing:-0.012px;left:582.6px;width:600px;text-align:center;margin-left:-0.006px;">(у відповідних клітинках проставляється позначка &quot;Х&quot;)</div>
<div style="position:absolute;left:610.30px;top:728.80px;width:536.70px;height:77.00px;border:1.2px solid #000"></div>
<div style="position:absolute;left:636.85px;top:729.4px;width:1.1px;height:75.8px;background:#000"></div>
<div style="position:absolute;left:905.85px;top:729.4px;width:1.1px;height:75.8px;background:#000"></div>
<div style="position:absolute;left:1001.85px;top:729.4px;width:1.1px;height:75.8px;background:#000"></div>
<div style="position:absolute;left:906.4px;top:759.75px;width:240.0px;height:1.1px;background:#000"></div>
<div style="position:absolute;left:906.4px;top:774.75px;width:240.0px;height:1.1px;background:#000"></div>
<div style="position:absolute;left:906.4px;top:789.65px;width:240.0px;height:1.1px;background:#000"></div>
<div style="position:absolute;white-space:pre;top:729.99px;font-size:11.72px;color:#000;font-family:'Liberation Serif',serif;line-height:11.72px;left:323.20000000000005px;width:600px;text-align:center;">06</div>
<div style="position:absolute;white-space:pre;top:729.99px;font-size:11.72px;color:#000;font-family:'Liberation Serif',serif;line-height:11.72px;left:639px;">Податкова адреса</div>
<div style="position:absolute;white-space:pre;top:745.99px;font-size:11.72px;color:#000;font-family:'Liberation Serif',serif;line-height:11.72px;left:470.75px;width:600px;text-align:center;transform:scaleX(0.9659);transform-origin:50% 0;">м.Львів, проспект Чорновола, 455</div>
<div style="position:absolute;left:646.2px;top:760.15px;width:250.5px;height:1.1px;background:#000"></div>
<div style="position:absolute;left:646.2px;top:774.85px;width:250.5px;height:1.1px;background:#000"></div>
<div style="position:absolute;white-space:pre;top:730.99px;font-size:11.72px;color:#000;font-family:'Liberation Serif',serif;line-height:11.72px;left:908px;">Поштовий</div>
<div style="position:absolute;white-space:pre;top:742.99px;font-size:11.72px;color:#000;font-family:'Liberation Serif',serif;line-height:11.72px;left:908px;">індекс</div>
<div style="position:absolute;white-space:pre;top:760.99px;font-size:11.72px;color:#000;font-family:'Liberation Serif',serif;line-height:11.72px;left:908px;">Телефон</div>
<div style="position:absolute;white-space:pre;top:775.99px;font-size:11.72px;color:#000;font-family:'Liberation Serif',serif;line-height:11.72px;left:908px;">Факс</div>
<div style="position:absolute;white-space:pre;top:790.99px;font-size:11.72px;color:#000;font-family:'Liberation Serif',serif;line-height:11.72px;left:908px;">E-mail</div>
<div style="position:absolute;white-space:pre;top:738.99px;font-size:11.72px;color:#000;font-family:'Liberation Serif',serif;line-height:11.72px;left:773.9000000000001px;width:600px;text-align:center;">79002</div>
<div style="position:absolute;white-space:pre;top:760.99px;font-size:11.72px;color:#000;font-family:'Liberation Serif',serif;line-height:11.72px;left:773.8px;width:600px;text-align:center;">044-585-60-36</div>
<div style="position:absolute;white-space:pre;top:776.99px;font-size:11.72px;color:#000;font-family:'Liberation Serif',serif;line-height:11.72px;left:773.8px;width:600px;text-align:center;">044-585-60-36</div>
<div style="position:absolute;white-space:pre;top:791.99px;font-size:11.72px;color:#000;font-family:'Liberation Serif',serif;line-height:11.72px;left:773.9000000000001px;width:600px;text-align:center;">fly@gmail.com</div>
<div style="position:absolute;left:610.30px;top:804.60px;width:536.70px;height:18.20px;border:1.2px solid #000"></div>
<div style="position:absolute;left:610.30px;top:821.60px;width:536.70px;height:16.10px;border:1.2px solid #000"></div>
<div style="position:absolute;white-space:pre;top:805.99px;font-size:11.72px;color:#000;font-family:'Liberation Serif',serif;line-height:11.72px;letter-spacing:-0.012px;left:612px;">Найменування контролюючого органу, до якого подається декларація акцизного податку</div>
<div style="position:absolute;white-space:pre;top:823.99px;font-size:11.72px;color:#000;font-family:'Liberation Serif',serif;line-height:11.72px;left:577.7px;width:600px;text-align:center;margin-left:-0.002px;">ГОЛОВНЕ УПРАВЛІННЯ ДПС У ВОЛИНСЬКІЙ ОБЛАСТІ,  ЛУЦЬКА ДПІ  (М.ЛУЦЬК)</div>
<div style="position:absolute;left:611px;top:846.5px;width:57.7px;height:1px;background:#000"></div>
<div style="position:absolute;white-space:pre;top:849.0px;font-size:9.7px;color:#000;font-family:'Liberation Serif',serif;line-height:9.7px;letter-spacing:-0.046px;left:612px;">1 Зазначається код за ЄДРПОУ платника податку або реєстраційний номер облікової картки платника податків - фізичної особи.</div>
<div style="position:absolute;white-space:pre;top:860.0px;font-size:9.7px;color:#000;font-family:'Liberation Serif',serif;line-height:9.7px;word-spacing:1.330px;left:612px;">2 Серію (за наявності) та номер паспорта зазначають фізичні особи, які через свої релігійні переконання відмовляються від</div>
<div style="position:absolute;white-space:pre;top:871.0px;font-size:9.7px;color:#000;font-family:'Liberation Serif',serif;line-height:9.7px;letter-spacing:-0.027px;left:612px;">прийняття реєстраційного номера облікової картки платника податків та офіційно повідомили про це відповідний контролюючий</div>
<div style="position:absolute;left:1345px;top:37px;width:8px;height:850px;background:#f1f2f4"></div>
</body></html>
